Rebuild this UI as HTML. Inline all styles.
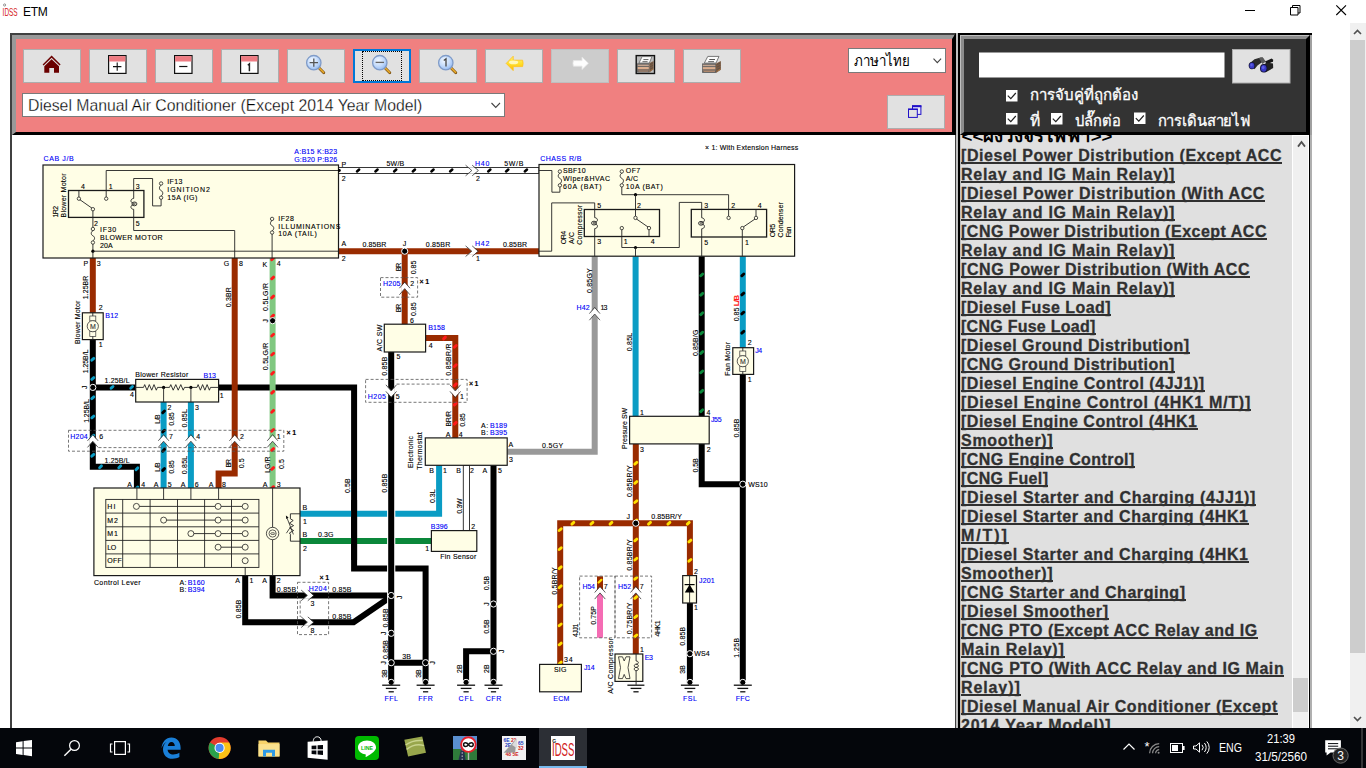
<!DOCTYPE html><html><head><meta charset="utf-8"><title>ETM</title><style>
*{box-sizing:border-box;margin:0;padding:0}
html,body{width:1366px;height:768px;overflow:hidden;background:#fff;font-family:"Liberation Sans",sans-serif;}
.abs{position:absolute}
#title{position:absolute;left:0;top:0;width:1366px;height:23px;background:#fff}
#title .t{position:absolute;left:23px;top:5px;font-size:12px;color:#000;letter-spacing:-0.3px}
#lp{position:absolute;left:14px;top:37px;width:939px;height:96px;background:#f08080}
.btn{position:absolute;top:49px;width:58px;height:34px;background:#e1e1e1;border:1px solid #adadad}
.btn svg{position:absolute;left:0;top:0}
#sel1{position:absolute;left:22px;top:93px;width:483px;height:24px;background:#fff;border:1px solid #7a7a7a;font-size:15.8px;line-height:24px;padding-left:5px;color:#000;-webkit-text-stroke:0.28px #fff;white-space:nowrap}
#sel2{position:absolute;left:848px;top:48px;width:98px;height:25px;background:#fff;border:1px solid #7a7a7a}
#rp{position:absolute;left:958px;top:33px;width:354px;height:102px;background:#333}
#list{position:absolute;left:961px;top:135px;width:331px;height:593px;background:#e0e0e0;overflow:hidden}
#list .l{position:absolute;left:0;font-size:16px;font-weight:bold;color:#303030;white-space:nowrap;line-height:19px;height:19px}
#list .l span{display:inline-block;border-bottom:2px solid #303030;height:18.5px;line-height:19px;-webkit-text-stroke:0.3px #303030}
#task{position:absolute;left:0;top:728px;width:1366px;height:40px;background:#04060b}
</style></head><body><div id="title"><svg class="abs" style="left:0;top:0" width="22" height="22"><circle cx="4.6" cy="5" r="1.1" fill="none" stroke="#555" stroke-width="0.6"/><text x="2.6" y="15.8" font-family="Liberation Sans,sans-serif" font-size="11.6" fill="#d42020" textLength="15" lengthAdjust="spacingAndGlyphs">IDSS</text></svg><div class="t">ETM</div><svg class="abs" style="left:1226px;top:0" width="140" height="23"><path d="M19 10.5 H29" stroke="#000" stroke-width="1"/><path d="M64.5 7.5 H72 V15 H64.5 Z M66.5 7.5 V5.5 H74 V13 H72" fill="none" stroke="#000" stroke-width="1"/><path d="M110.3 5.3 L120 15 M120 5.3 L110.3 15" stroke="#000" stroke-width="1.1"/></svg></div><div class="abs" style="left:1350px;top:23px;width:16px;height:705px;background:#f0f0f0"></div><div class="abs" style="left:1350px;top:40px;width:15px;height:613px;background:#cdcdcd"></div><svg class="abs" style="left:1350px;top:23px" width="16" height="17"><path d="M4 11 L7.5 7.5 L11 11" fill="none" stroke="#505050" stroke-width="1.6"/></svg><svg class="abs" style="left:1350px;top:711px" width="16" height="17"><path d="M4 6 L7.5 9.5 L11 6" fill="none" stroke="#505050" stroke-width="1.6"/></svg><svg class="abs" style="left:0;top:0" width="1366" height="140"><rect x="10" y="33" width="946" height="102" fill="#404040"/><rect x="12" y="35" width="942" height="100" fill="#999"/><polygon points="956,33 956,135 952,135 952,39" fill="#000"/><polygon points="12,135 16,132 956,132 956,135" fill="#000"/><rect x="16" y="39" width="936" height="93" fill="#f08080"/></svg><div class="btn" style="left:23px;"><svg style="position:absolute;left:-1px;top:-1px" width="58" height="34" viewBox="0 0 58 34"><path d="M28.6 6.6 L19.6 15.4 L20.6 16.4 L28.6 8.8 L36.6 16.4 L37.6 15.4 Z" fill="#6b0000"/><path d="M28.6 10.2 L21.3 17.2 V23.8 H26.3 V18.9 H31 V23.8 H36 V17.2 Z" fill="#6b0000"/></svg></div><div class="btn" style="left:89px;"><svg style="position:absolute;left:-1px;top:-1px" width="58" height="34" viewBox="0 0 58 34"><rect x="19.6" y="6.6" width="17.4" height="17.8" fill="#fff" stroke="#111" stroke-width="1.2"/><rect x="20.1" y="7.1" width="16.3" height="5.4" fill="#ee7b82"/><path d="M24 17.6 H32.4 M28.2 13.4 V21.8" stroke="#111" stroke-width="1.1"/></svg></div><div class="btn" style="left:155px;"><svg style="position:absolute;left:-1px;top:-1px" width="58" height="34" viewBox="0 0 58 34"><rect x="19.6" y="6.6" width="17.4" height="17.8" fill="#fff" stroke="#111" stroke-width="1.2"/><rect x="20.1" y="7.1" width="16.3" height="5.4" fill="#ee7b82"/><path d="M24.2 17.5 H32.4" stroke="#111" stroke-width="1.2"/></svg></div><div class="btn" style="left:221px;"><svg style="position:absolute;left:-1px;top:-1px" width="58" height="34" viewBox="0 0 58 34"><rect x="19.6" y="6.6" width="17.4" height="17.8" fill="#fff" stroke="#111" stroke-width="1.2"/><rect x="20.1" y="7.1" width="16.3" height="5.4" fill="#ee7b82"/><path d="M26.8 16.2 L28.4 14.8 V22.2" stroke="#222" stroke-width="1.5" fill="none"/></svg></div><div class="btn" style="left:287px;"><svg style="position:absolute;left:-1px;top:-1px" width="58" height="34" viewBox="0 0 58 34"><defs><radialGradient id="lg1" cx="0.4" cy="0.35" r="0.7"><stop offset="0" stop-color="#f2f8ff"/><stop offset="0.55" stop-color="#c4dbfb"/><stop offset="1" stop-color="#8fb6f0"/></radialGradient></defs><path d="M31.6 18.6 L36.8 23.8" stroke="#7a4e10" stroke-width="2.8" stroke-linecap="round"/><path d="M31.8 18.6 L36.6 23.4" stroke="#e8aa2a" stroke-width="1.5" stroke-linecap="round"/><circle cx="26.8" cy="13.7" r="7.2" fill="url(#lg1)" stroke="#7f9bc8" stroke-width="1.3"/><path d="M22.6 13.6 H31 M26.8 9.4 V17.8" stroke="#555" stroke-width="1.3"/></svg></div><div class="btn" style="left:353px;border:2px solid #0078d7;"><div style="position:absolute;left:7px;top:0px;width:40px;height:30px;border:1px dotted #000"></div><svg style="position:absolute;left:-2px;top:-2px" width="58" height="34" viewBox="0 0 58 34"><defs><radialGradient id="lg2" cx="0.4" cy="0.35" r="0.7"><stop offset="0" stop-color="#f2f8ff"/><stop offset="0.55" stop-color="#c4dbfb"/><stop offset="1" stop-color="#8fb6f0"/></radialGradient></defs><path d="M31.6 18.6 L36.8 23.8" stroke="#7a4e10" stroke-width="2.8" stroke-linecap="round"/><path d="M31.8 18.6 L36.6 23.4" stroke="#e8aa2a" stroke-width="1.5" stroke-linecap="round"/><circle cx="26.8" cy="13.7" r="7.2" fill="url(#lg2)" stroke="#7f9bc8" stroke-width="1.3"/><path d="M22.6 13.4 H31" stroke="#666" stroke-width="1.3"/></svg></div><div class="btn" style="left:419px;"><svg style="position:absolute;left:-1px;top:-1px" width="58" height="34" viewBox="0 0 58 34"><defs><radialGradient id="lg3" cx="0.4" cy="0.35" r="0.7"><stop offset="0" stop-color="#f2f8ff"/><stop offset="0.55" stop-color="#c4dbfb"/><stop offset="1" stop-color="#8fb6f0"/></radialGradient></defs><path d="M31.6 18.6 L36.8 23.8" stroke="#7a4e10" stroke-width="2.8" stroke-linecap="round"/><path d="M31.8 18.6 L36.6 23.4" stroke="#e8aa2a" stroke-width="1.5" stroke-linecap="round"/><circle cx="26.8" cy="13.7" r="7.2" fill="url(#lg3)" stroke="#7f9bc8" stroke-width="1.3"/><path d="M24.8 11.6 L27 9.8 V17.6" stroke="#444" stroke-width="1.3" fill="none"/></svg></div><div class="btn" style="left:485px;"><svg style="position:absolute;left:-1px;top:-1px" width="58" height="34" viewBox="0 0 58 34"><defs><linearGradient id="ya" x1="0" y1="0" x2="0" y2="1"><stop offset="0" stop-color="#fff27a"/><stop offset="0.5" stop-color="#ffe12e"/><stop offset="1" stop-color="#ffb400"/></linearGradient></defs><path d="M21.2 14.4 L28.2 7.2 V11.2 H37.6 Q38.6 14.4 37.6 17.6 H28.2 V21.6 Z" fill="url(#ya)" stroke="#ffc21a" stroke-width="0.8" stroke-linejoin="round"/><ellipse cx="28.6" cy="13.4" rx="4.6" ry="1.8" fill="#fffbd0" opacity="0.85"/></svg></div><div class="btn" style="left:551px;background:#cccccc;border-color:#bfbfbf;"><svg style="position:absolute;left:-1px;top:-1px" width="58" height="34" viewBox="0 0 58 34"><path d="M37.4 14.3 L31 8 V11.6 H22.4 Q21.4 14.3 22.4 17.2 H31 V20.6 Z" fill="#fdfdfd" stroke="#e4e4e4" stroke-width="0.8" stroke-linejoin="round"/></svg></div><div class="btn" style="left:617px;"><svg style="position:absolute;left:-1px;top:-1px" width="58" height="34" viewBox="0 0 58 34"><rect x="19.2" y="6.6" width="18.3" height="17.9" fill="#bdbdbd" stroke="#111" stroke-width="1.4"/><g transform="translate(20,7.4) scale(0.88,0.96)"><g transform="translate(0.0,0.0)"><polygon points="5.8,0.2 17,0.2 14,6.9 2.3,6.9" fill="#fbfbfb" stroke="#6a6a6a" stroke-width="0.9"/><path d="M7.3 3.3 H13 M6.2 5.5 H12" stroke="#555" stroke-width="1"/><rect x="0.1" y="7.2" width="13.9" height="9.5" fill="#5e5e5e"/><rect x="0.8" y="8.5" width="12.6" height="1.5" fill="#c4a692"/><rect x="0.8" y="10.9" width="12.6" height="2.3" fill="#dcae8e"/><rect x="0.8" y="13.2" width="12.6" height="1.6" fill="#8c7668"/><rect x="1.6" y="14.9" width="11.4" height="0.9" fill="#b98e70"/><polygon points="14,7.2 18.9,4.9 18.9,13.5 14,16.7" fill="#7d5c42"/><path d="M14.6 8.6 L18.4 6.8 M14.6 11 L18.4 9.2 M14.6 13.4 L18.4 11.6" stroke="#5a5048" stroke-width="0.9"/><path d="M15.4 15 L18.6 12.9" stroke="#b07840" stroke-width="0.8"/></g></g></svg></div><div class="btn" style="left:683px;"><svg style="position:absolute;left:-1px;top:-1px" width="58" height="34" viewBox="0 0 58 34"><g transform="translate(19.0,7.2)"><polygon points="5.8,0.2 17,0.2 14,6.9 2.3,6.9" fill="#fbfbfb" stroke="#6a6a6a" stroke-width="0.9"/><path d="M7.3 3.3 H13 M6.2 5.5 H12" stroke="#555" stroke-width="1"/><rect x="0.1" y="7.2" width="13.9" height="9.5" fill="#5e5e5e"/><rect x="0.8" y="8.5" width="12.6" height="1.5" fill="#c4a692"/><rect x="0.8" y="10.9" width="12.6" height="2.3" fill="#dcae8e"/><rect x="0.8" y="13.2" width="12.6" height="1.6" fill="#8c7668"/><rect x="1.6" y="14.9" width="11.4" height="0.9" fill="#b98e70"/><polygon points="14,7.2 18.9,4.9 18.9,13.5 14,16.7" fill="#7d5c42"/><path d="M14.6 8.6 L18.4 6.8 M14.6 11 L18.4 9.2 M14.6 13.4 L18.4 11.6" stroke="#5a5048" stroke-width="0.9"/><path d="M15.4 15 L18.6 12.9" stroke="#b07840" stroke-width="0.8"/></g></svg></div><div class="btn" style="left:887px;top:95px"><svg style="position:absolute;left:-1px;top:-1px" width="58" height="34" viewBox="0 0 58 34"><rect x="25.5" y="11" width="8.4" height="8.4" fill="#e8e8fa" stroke="#2010c8" stroke-width="1"/><rect x="25" y="10.2" width="9.4" height="2" fill="#2010c8"/><rect x="21.5" y="14.2" width="8.8" height="8.2" fill="#e1e1e1" stroke="#2010c8" stroke-width="1"/><rect x="21" y="13.6" width="9.8" height="1.4" fill="#2010c8"/></svg></div><div id="sel1"><span id="s1t">Diesel Manual Air Conditioner (Except 2014 Year Model)</span><svg class="abs" style="right:2px;top:6px" width="12" height="10"><path d="M1.5 3 L5.75 7.4 L10 3" fill="none" stroke="#444" stroke-width="1.1"/></svg></div><div id="sel2"><svg class="abs" style="left:0;top:0" width="96" height="23"><text x="5" y="17" font-family="Liberation Sans,sans-serif" font-size="15" fill="#000" textLength="56" lengthAdjust="spacingAndGlyphs">ภาษาไทย</text><path d="M84.5 9.6 L88.3 13.6 L92.1 9.6" fill="none" stroke="#444" stroke-width="1.1"/></svg></div><div class="abs" style="left:10px;top:135px;width:2px;height:593px;background:#404040"></div><div class="abs" style="left:955px;top:135px;width:1px;height:593px;background:#404040"></div><div class="abs" style="left:956px;top:33px;width:2px;height:695px;background:#c0c0c0"></div><svg class="abs" style="left:0;top:0" width="1366" height="728" viewBox="0 0 1366 728" font-family="Liberation Sans,sans-serif" stroke-width="0.12"><defs><clipPath id="dc"><rect x="12" y="135" width="943" height="593"/></clipPath></defs><g clip-path="url(#dc)"><rect x="338.5" y="167.5" width="200.5" height="6" fill="#fff" stroke="#222" stroke-width="0.9"/><path d="M357.0 171.5 L359.2 169.5" stroke="#000" stroke-width="2.5" stroke-linecap="round"/><path d="M375.4 171.5 L377.6 169.5" stroke="#000" stroke-width="2.5" stroke-linecap="round"/><path d="M394.1 171.5 L396.3 169.5" stroke="#000" stroke-width="2.5" stroke-linecap="round"/><path d="M412.8 171.5 L415.0 169.5" stroke="#000" stroke-width="2.5" stroke-linecap="round"/><path d="M431.4 171.5 L433.6 169.5" stroke="#000" stroke-width="2.5" stroke-linecap="round"/><path d="M450.1 171.5 L452.3 169.5" stroke="#000" stroke-width="2.5" stroke-linecap="round"/><path d="M488.2 171.5 L490.4 169.5" stroke="#000" stroke-width="2.5" stroke-linecap="round"/><path d="M506.1 171.5 L508.3 169.5" stroke="#000" stroke-width="2.5" stroke-linecap="round"/><path d="M524.8 171.5 L527.0 169.5" stroke="#000" stroke-width="2.5" stroke-linecap="round"/><polyline points="338.5,251.2 539.0,251.2" fill="none" stroke="#992b00" stroke-width="6.0" stroke-linejoin="miter" /><polyline points="404.7,251.2 404.7,324.5" fill="none" stroke="#992b00" stroke-width="6.0" stroke-linejoin="miter" /><polyline points="92.8,258.0 92.8,313.0" fill="none" stroke="#992b00" stroke-width="6.0" stroke-linejoin="miter" /><polyline points="92.8,339.6 92.8,466.8 136.9,466.8 136.9,488.0" fill="none" stroke="#000" stroke-width="6.0" stroke-linejoin="miter" /><path d="M91.8 360.2 L93.8 358.4" stroke="#0a9cc4" stroke-width="2.9" stroke-linecap="round"/><path d="M91.8 379.4 L93.8 377.6" stroke="#0a9cc4" stroke-width="2.9" stroke-linecap="round"/><path d="M91.8 398.6 L93.8 396.9" stroke="#0a9cc4" stroke-width="2.9" stroke-linecap="round"/><path d="M91.8 417.8 L93.8 416.1" stroke="#0a9cc4" stroke-width="2.9" stroke-linecap="round"/><path d="M91.8 437.0 L93.8 435.2" stroke="#0a9cc4" stroke-width="2.9" stroke-linecap="round"/><path d="M91.8 456.2 L93.8 454.4" stroke="#0a9cc4" stroke-width="2.9" stroke-linecap="round"/><path d="M99.6 467.7 L101.5 465.9" stroke="#0a9cc4" stroke-width="2.9" stroke-linecap="round"/><path d="M118.8 467.7 L120.7 465.9" stroke="#0a9cc4" stroke-width="2.9" stroke-linecap="round"/><path d="M136.0 469.7 L137.8 467.9" stroke="#0a9cc4" stroke-width="2.9" stroke-linecap="round"/><path d="M136.0 488.9 L137.8 487.1" stroke="#0a9cc4" stroke-width="2.9" stroke-linecap="round"/><polyline points="92.8,387.4 135.7,387.4" fill="none" stroke="#000" stroke-width="6.0" stroke-linejoin="miter" /><path d="M111.1 388.2 L113.0 386.5" stroke="#0a9cc4" stroke-width="2.9" stroke-linecap="round"/><path d="M130.7 388.2 L132.5 386.5" stroke="#0a9cc4" stroke-width="2.9" stroke-linecap="round"/><polyline points="218.6,387.5 354.1,387.5 354.1,568.5 425.6,568.5 425.6,682.0" fill="none" stroke="#000" stroke-width="6.0" stroke-linejoin="miter" /><polyline points="234.7,258.0 234.7,473.5 218.6,473.5 218.6,488.0" fill="none" stroke="#992b00" stroke-width="6.0" stroke-linejoin="miter" /><polyline points="272.6,258.0 272.6,488.0" fill="none" stroke="#80c880" stroke-width="6.0" stroke-linejoin="miter" /><path d="M271.7 259.8 L273.6 258.0" stroke="#ff1a1a" stroke-width="2.9" stroke-linecap="round"/><path d="M271.7 278.8 L273.6 277.1" stroke="#ff1a1a" stroke-width="2.9" stroke-linecap="round"/><path d="M271.7 297.9 L273.6 296.1" stroke="#ff1a1a" stroke-width="2.9" stroke-linecap="round"/><path d="M271.7 316.9 L273.6 315.2" stroke="#ff1a1a" stroke-width="2.9" stroke-linecap="round"/><path d="M271.7 336.0 L273.6 334.2" stroke="#ff1a1a" stroke-width="2.9" stroke-linecap="round"/><path d="M271.7 355.0 L273.6 353.3" stroke="#ff1a1a" stroke-width="2.9" stroke-linecap="round"/><path d="M271.7 374.1 L273.6 372.3" stroke="#ff1a1a" stroke-width="2.9" stroke-linecap="round"/><path d="M271.7 393.1 L273.6 391.4" stroke="#ff1a1a" stroke-width="2.9" stroke-linecap="round"/><path d="M271.7 412.2 L273.6 410.4" stroke="#ff1a1a" stroke-width="2.9" stroke-linecap="round"/><path d="M271.7 431.2 L273.6 429.5" stroke="#ff1a1a" stroke-width="2.9" stroke-linecap="round"/><path d="M271.7 450.3 L273.6 448.6" stroke="#ff1a1a" stroke-width="2.9" stroke-linecap="round"/><path d="M271.7 469.3 L273.6 467.6" stroke="#ff1a1a" stroke-width="2.9" stroke-linecap="round"/><path d="M271.7 488.4 L273.6 486.7" stroke="#ff1a1a" stroke-width="2.9" stroke-linecap="round"/><polyline points="163.6,402.0 163.6,488.0" fill="none" stroke="#0a9cc4" stroke-width="6.0" stroke-linejoin="miter" /><path d="M162.7 412.8 L164.5 411.0" stroke="#000" stroke-width="2.9" stroke-linecap="round"/><path d="M162.7 432.0 L164.5 430.2" stroke="#000" stroke-width="2.9" stroke-linecap="round"/><path d="M162.7 451.2 L164.5 449.4" stroke="#000" stroke-width="2.9" stroke-linecap="round"/><path d="M162.7 470.4 L164.5 468.6" stroke="#000" stroke-width="2.9" stroke-linecap="round"/><polyline points="190.9,402.0 190.9,488.0" fill="none" stroke="#0a9cc4" stroke-width="6.0" stroke-linejoin="miter" /><polyline points="300.0,513.8 439.1,513.8 439.1,465.3" fill="none" stroke="#0a9cc4" stroke-width="6.0" stroke-linejoin="miter" /><polyline points="300.0,541.0 431.5,541.0" fill="none" stroke="#0a873a" stroke-width="6.0" stroke-linejoin="miter" /><polyline points="354.1,500.0 354.1,560.0" fill="none" stroke="#000" stroke-width="6.0" stroke-linejoin="miter" /><polyline points="272.6,575.6 272.6,595.4 391.2,595.4" fill="none" stroke="#000" stroke-width="6.0" stroke-linejoin="miter" /><polyline points="245.2,575.6 245.2,622.2 353.6,622.2 391.2,596.5" fill="none" stroke="#000" stroke-width="6.0" stroke-linejoin="miter" /><polyline points="391.2,352.0 391.2,682.0" fill="none" stroke="#fff" stroke-width="8.2" stroke-linejoin="miter" /><polyline points="391.2,352.0 391.2,682.0" fill="none" stroke="#000" stroke-width="6.0" stroke-linejoin="miter" /><polyline points="388.0,595.4 391.2,595.4" fill="none" stroke="#000" stroke-width="6.0" stroke-linejoin="miter" /><polyline points="391.2,662.7 425.6,662.7" fill="none" stroke="#000" stroke-width="6.0" stroke-linejoin="miter" /><polyline points="425.6,338.0 455.3,338.0 455.3,438.0" fill="none" stroke="#992b00" stroke-width="6.0" stroke-linejoin="miter" /><path d="M443.6 338.9 L445.4 337.1" stroke="#ff1a1a" stroke-width="2.9" stroke-linecap="round"/><path d="M454.4 347.2 L456.2 345.5" stroke="#ff1a1a" stroke-width="2.9" stroke-linecap="round"/><path d="M454.4 366.5 L456.2 364.8" stroke="#ff1a1a" stroke-width="2.9" stroke-linecap="round"/><path d="M454.4 385.7 L456.2 383.9" stroke="#ff1a1a" stroke-width="2.9" stroke-linecap="round"/><path d="M454.4 404.9 L456.2 403.1" stroke="#ff1a1a" stroke-width="2.9" stroke-linecap="round"/><path d="M454.4 424.1 L456.2 422.4" stroke="#ff1a1a" stroke-width="2.9" stroke-linecap="round"/><rect x="463.3" y="465.3" width="6.2" height="65.5" fill="#fff" stroke="#222" stroke-width="0.9"/><polyline points="493.5,465.3 493.5,682.0" fill="none" stroke="#000" stroke-width="6.0" stroke-linejoin="miter" /><polyline points="466.1,682.0 466.1,651.3 493.5,651.3" fill="none" stroke="#000" stroke-width="6.0" stroke-linejoin="miter" /><polyline points="594.7,256.2 594.7,451.7 507.2,451.7" fill="none" stroke="#999999" stroke-width="6.0" stroke-linejoin="miter" /><polyline points="635.6,256.2 635.6,416.5" fill="none" stroke="#0a9cc4" stroke-width="6.0" stroke-linejoin="miter" /><polyline points="701.7,256.2 701.7,416.5" fill="none" stroke="#000" stroke-width="6.0" stroke-linejoin="miter" /><path d="M700.8 275.8 L702.7 274.0" stroke="#0a873a" stroke-width="2.9" stroke-linecap="round"/><path d="M700.8 295.1 L702.7 293.4" stroke="#0a873a" stroke-width="2.9" stroke-linecap="round"/><path d="M700.8 314.6 L702.7 312.8" stroke="#0a873a" stroke-width="2.9" stroke-linecap="round"/><path d="M700.8 333.9 L702.7 332.2" stroke="#0a873a" stroke-width="2.9" stroke-linecap="round"/><path d="M700.8 353.4 L702.7 351.6" stroke="#0a873a" stroke-width="2.9" stroke-linecap="round"/><path d="M700.8 372.8 L702.7 371.0" stroke="#0a873a" stroke-width="2.9" stroke-linecap="round"/><path d="M700.8 392.1 L702.7 390.4" stroke="#0a873a" stroke-width="2.9" stroke-linecap="round"/><path d="M700.8 411.6 L702.7 409.8" stroke="#0a873a" stroke-width="2.9" stroke-linecap="round"/><polyline points="742.8,256.2 742.8,348.0" fill="none" stroke="#0a9cc4" stroke-width="6.0" stroke-linejoin="miter" /><path d="M741.8 275.8 L743.8 274.0" stroke="#000" stroke-width="2.9" stroke-linecap="round"/><path d="M741.8 294.9 L743.8 293.1" stroke="#000" stroke-width="2.9" stroke-linecap="round"/><path d="M741.8 313.9 L743.8 312.2" stroke="#000" stroke-width="2.9" stroke-linecap="round"/><path d="M741.8 333.1 L743.8 331.3" stroke="#000" stroke-width="2.9" stroke-linecap="round"/><polyline points="742.8,374.4 742.8,682.0" fill="none" stroke="#000" stroke-width="6.0" stroke-linejoin="miter" /><polyline points="701.7,443.9 701.7,484.2 742.8,484.2" fill="none" stroke="#000" stroke-width="6.0" stroke-linejoin="miter" /><polyline points="635.8,443.9 635.8,654.0" fill="none" stroke="#992b00" stroke-width="6.0" stroke-linejoin="miter" /><path d="M634.8 464.1 L636.8 462.4" stroke="#ffe000" stroke-width="2.9" stroke-linecap="round"/><path d="M634.8 483.3 L636.8 481.6" stroke="#ffe000" stroke-width="2.9" stroke-linecap="round"/><path d="M634.8 502.5 L636.8 500.8" stroke="#ffe000" stroke-width="2.9" stroke-linecap="round"/><path d="M634.8 521.7 L636.8 520.0" stroke="#ffe000" stroke-width="2.9" stroke-linecap="round"/><path d="M634.8 540.8 L636.8 539.1" stroke="#ffe000" stroke-width="2.9" stroke-linecap="round"/><path d="M634.8 560.0 L636.8 558.3" stroke="#ffe000" stroke-width="2.9" stroke-linecap="round"/><path d="M634.8 579.2 L636.8 577.5" stroke="#ffe000" stroke-width="2.9" stroke-linecap="round"/><path d="M634.8 598.3 L636.8 596.6" stroke="#ffe000" stroke-width="2.9" stroke-linecap="round"/><path d="M634.8 617.5 L636.8 615.8" stroke="#ffe000" stroke-width="2.9" stroke-linecap="round"/><path d="M634.8 636.7 L636.8 635.0" stroke="#ffe000" stroke-width="2.9" stroke-linecap="round"/><polyline points="560.2,664.5 560.2,523.2 689.9,523.2 689.9,575.6" fill="none" stroke="#992b00" stroke-width="6.0" stroke-linejoin="miter" /><path d="M610.0 524.1 L611.9 522.4" stroke="#ffe000" stroke-width="2.9" stroke-linecap="round"/><path d="M590.9 524.1 L592.9 522.4" stroke="#ffe000" stroke-width="2.9" stroke-linecap="round"/><path d="M571.9 524.1 L573.8 522.4" stroke="#ffe000" stroke-width="2.9" stroke-linecap="round"/><path d="M559.2 530.5 L561.2 528.8" stroke="#ffe000" stroke-width="2.9" stroke-linecap="round"/><path d="M559.2 549.5 L561.2 547.8" stroke="#ffe000" stroke-width="2.9" stroke-linecap="round"/><path d="M559.2 568.6 L561.2 566.9" stroke="#ffe000" stroke-width="2.9" stroke-linecap="round"/><path d="M559.2 587.6 L561.2 585.9" stroke="#ffe000" stroke-width="2.9" stroke-linecap="round"/><path d="M559.2 606.7 L561.2 605.0" stroke="#ffe000" stroke-width="2.9" stroke-linecap="round"/><path d="M559.2 625.7 L561.2 624.0" stroke="#ffe000" stroke-width="2.9" stroke-linecap="round"/><path d="M559.2 644.8 L561.2 643.1" stroke="#ffe000" stroke-width="2.9" stroke-linecap="round"/><path d="M559.2 663.8 L561.2 662.1" stroke="#ffe000" stroke-width="2.9" stroke-linecap="round"/><path d="M648.5 524.1 L650.5 522.4" stroke="#ffe000" stroke-width="2.9" stroke-linecap="round"/><path d="M667.9 524.1 L669.9 522.4" stroke="#ffe000" stroke-width="2.9" stroke-linecap="round"/><path d="M687.3 524.1 L689.2 522.4" stroke="#ffe000" stroke-width="2.9" stroke-linecap="round"/><path d="M688.9 541.9 L690.9 540.1" stroke="#ffe000" stroke-width="2.9" stroke-linecap="round"/><path d="M688.9 561.2 L690.9 559.5" stroke="#ffe000" stroke-width="2.9" stroke-linecap="round"/><polyline points="600.0,576.3 600.0,590.0" fill="none" stroke="#992b00" stroke-width="6.0" stroke-linejoin="miter" /><path d="M598.6 582.5 L601.4 579.9" stroke="#ffe000" stroke-width="2.3" stroke-linecap="round"/><polyline points="600.0,592.0 600.0,637.8" fill="none" stroke="#f56cb4" stroke-width="6.0" stroke-linejoin="miter" /><polyline points="689.9,603.0 689.9,682.0" fill="none" stroke="#000" stroke-width="6.0" stroke-linejoin="miter" /><circle cx="404.7" cy="251.2" r="3.1" fill="#000" stroke="#fff" stroke-width="1"/><circle cx="92.8" cy="387.4" r="3.1" fill="#000" stroke="#fff" stroke-width="1"/><circle cx="272.6" cy="320.7" r="3.1" fill="#000" stroke="#fff" stroke-width="1"/><circle cx="635.8" cy="523.2" r="3.1" fill="#000" stroke="#fff" stroke-width="1"/><circle cx="391.2" cy="595.5" r="3.1" fill="#000" stroke="#fff" stroke-width="1"/><circle cx="391.2" cy="633.3" r="3.1" fill="#000" stroke="#fff" stroke-width="1"/><circle cx="391.2" cy="662.7" r="3.1" fill="#000" stroke="#fff" stroke-width="1"/><circle cx="425.6" cy="662.7" r="3.1" fill="#000" stroke="#fff" stroke-width="1"/><circle cx="493.5" cy="604.0" r="3.1" fill="#000" stroke="#fff" stroke-width="1"/><circle cx="493.5" cy="651.3" r="3.1" fill="#000" stroke="#fff" stroke-width="1"/><circle cx="742.8" cy="484.2" r="3.1" fill="#000" stroke="#fff" stroke-width="1"/><circle cx="689.9" cy="653.7" r="3.1" fill="#000" stroke="#fff" stroke-width="1"/><polygon points="89.5,438.9 92.8,435.2 96.1,438.9 96.1,445.1 92.8,441.4 89.5,445.1" fill="#fff"/><polyline points="87.5,440.8 92.8,434.6 98.1,440.8" fill="none" stroke="#333" stroke-width="0.8"/><polyline points="87.5,447.4 92.8,441.2 98.1,447.4" fill="none" stroke="#333" stroke-width="0.8"/><polygon points="160.3,438.9 163.6,435.2 166.9,438.9 166.9,445.1 163.6,441.4 160.3,445.1" fill="#fff"/><polyline points="158.3,440.8 163.6,434.6 168.9,440.8" fill="none" stroke="#333" stroke-width="0.8"/><polyline points="158.3,447.4 163.6,441.2 168.9,447.4" fill="none" stroke="#333" stroke-width="0.8"/><polygon points="187.6,438.9 190.9,435.2 194.2,438.9 194.2,445.1 190.9,441.4 187.6,445.1" fill="#fff"/><polyline points="185.6,440.8 190.9,434.6 196.2,440.8" fill="none" stroke="#333" stroke-width="0.8"/><polyline points="185.6,447.4 190.9,441.2 196.2,447.4" fill="none" stroke="#333" stroke-width="0.8"/><polygon points="231.4,438.9 234.7,435.2 238.0,438.9 238.0,445.1 234.7,441.4 231.4,445.1" fill="#fff"/><polyline points="229.4,440.8 234.7,434.6 240.0,440.8" fill="none" stroke="#333" stroke-width="0.8"/><polyline points="229.4,447.4 234.7,441.2 240.0,447.4" fill="none" stroke="#333" stroke-width="0.8"/><polygon points="269.3,438.9 272.6,435.2 275.9,438.9 275.9,445.1 272.6,441.4 269.3,445.1" fill="#fff"/><polyline points="267.3,440.8 272.6,434.6 277.9,440.8" fill="none" stroke="#333" stroke-width="0.8"/><polyline points="267.3,447.4 272.6,441.2 277.9,447.4" fill="none" stroke="#333" stroke-width="0.8"/><polygon points="401.4,286.3 404.7,282.6 408.0,286.3 408.0,292.5 404.7,288.8 401.4,292.5" fill="#fff"/><polyline points="399.4,288.2 404.7,282.0 410.0,288.2" fill="none" stroke="#333" stroke-width="0.8"/><polyline points="399.4,294.8 404.7,288.6 410.0,294.8" fill="none" stroke="#333" stroke-width="0.8"/><polygon points="591.4,311.7 594.7,308.0 598.0,311.7 598.0,317.9 594.7,314.2 591.4,317.9" fill="#fff"/><polyline points="589.4,313.6 594.7,307.4 600.0,313.6" fill="none" stroke="#333" stroke-width="0.8"/><polyline points="589.4,320.2 594.7,314.0 600.0,320.2" fill="none" stroke="#333" stroke-width="0.8"/><polygon points="387.9,393.3 391.2,397.0 394.5,393.3 394.5,387.1 391.2,390.8 387.9,387.1" fill="#fff"/><polyline points="385.9,391.4 391.2,397.6 396.5,391.4" fill="none" stroke="#333" stroke-width="0.8"/><polyline points="385.9,384.8 391.2,391.0 396.5,384.8" fill="none" stroke="#333" stroke-width="0.8"/><polygon points="452.0,393.3 455.3,397.0 458.6,393.3 458.6,387.1 455.3,390.8 452.0,387.1" fill="#fff"/><polyline points="450.0,391.4 455.3,397.6 460.6,391.4" fill="none" stroke="#333" stroke-width="0.8"/><polyline points="450.0,384.8 455.3,391.0 460.6,384.8" fill="none" stroke="#333" stroke-width="0.8"/><polygon points="474.1,167.2 477.8,170.5 474.1,173.8 467.9,173.8 471.6,170.5 467.9,167.2" fill="#fff"/><polyline points="472.2,165.2 478.4,170.5 472.2,175.8" fill="none" stroke="#333" stroke-width="0.8"/><polyline points="465.6,165.2 471.8,170.5 465.6,175.8" fill="none" stroke="#333" stroke-width="0.8"/><polygon points="474.1,247.9 477.8,251.2 474.1,254.5 467.9,254.5 471.6,251.2 467.9,247.9" fill="#fff"/><polyline points="472.2,245.9 478.4,251.2 472.2,256.5" fill="none" stroke="#333" stroke-width="0.8"/><polyline points="465.6,245.9 471.8,251.2 465.6,256.5" fill="none" stroke="#333" stroke-width="0.8"/><polygon points="309.7,592.1 313.4,595.4 309.7,598.7 303.5,598.7 307.2,595.4 303.5,592.1" fill="#fff"/><polyline points="307.8,590.1 314.0,595.4 307.8,600.7" fill="none" stroke="#333" stroke-width="0.8"/><polyline points="301.2,590.1 307.4,595.4 301.2,600.7" fill="none" stroke="#333" stroke-width="0.8"/><polygon points="309.7,618.9 313.4,622.2 309.7,625.5 303.5,625.5 307.2,622.2 303.5,618.9" fill="#fff"/><polyline points="307.8,616.9 314.0,622.2 307.8,627.5" fill="none" stroke="#333" stroke-width="0.8"/><polyline points="301.2,616.9 307.4,622.2 301.2,627.5" fill="none" stroke="#333" stroke-width="0.8"/><path d="M300.2 600.5 V617" stroke="#555" stroke-width="0.8" stroke-dasharray="3 2"/><polygon points="596.7,590.6 600.0,586.9 603.3,590.6 603.3,596.8 600.0,593.1 596.7,596.8" fill="#fff"/><polyline points="594.7,592.5 600.0,586.3 605.3,592.5" fill="none" stroke="#333" stroke-width="0.8"/><polyline points="594.7,599.1 600.0,592.9 605.3,599.1" fill="none" stroke="#333" stroke-width="0.8"/><polygon points="632.5,590.6 635.8,586.9 639.1,590.6 639.1,596.8 635.8,593.1 632.5,596.8" fill="#fff"/><polyline points="630.5,592.5 635.8,586.3 641.1,592.5" fill="none" stroke="#333" stroke-width="0.8"/><polyline points="630.5,599.1 635.8,592.9 641.1,599.1" fill="none" stroke="#333" stroke-width="0.8"/><path d="M98.5 447.6 H267 M396.6 384.1 H450" stroke="#555" stroke-width="0.8" stroke-dasharray="3 2"/><rect x="68.5" y="430.3" width="215.3" height="20.9" fill="none" stroke="#555" stroke-width="0.8" stroke-dasharray="3 2"/><rect x="380.5" y="277.6" width="37.1" height="19.6" fill="none" stroke="#555" stroke-width="0.8" stroke-dasharray="3 2"/><rect x="365.6" y="379.4" width="101.5" height="22.9" fill="none" stroke="#555" stroke-width="0.8" stroke-dasharray="3 2"/><rect x="297.5" y="582.3" width="31.1" height="52.3" fill="none" stroke="#555" stroke-width="0.8" stroke-dasharray="3 2"/><rect x="579.6" y="576.1" width="35.4" height="61.7" fill="none" stroke="#555" stroke-width="0.8" stroke-dasharray="3 2"/><rect x="615.0" y="576.1" width="36.6" height="61.7" fill="none" stroke="#555" stroke-width="0.8" stroke-dasharray="3 2"/><rect x="43.0" y="165.0" width="295.5" height="93.0" fill="#fffee6" stroke="#1a1a1a" stroke-width="1.2"/><rect x="539.0" y="164.5" width="255.6" height="91.7" fill="#fffee6" stroke="#1a1a1a" stroke-width="1.2"/><rect x="82.4" y="312.8" width="20.8" height="26.8" fill="#fffee6" stroke="#1a1a1a" stroke-width="1.2"/><rect x="135.7" y="379.4" width="82.9" height="22.6" fill="#fffee6" stroke="#1a1a1a" stroke-width="1.2"/><rect x="93.9" y="488.0" width="206.1" height="87.6" fill="#fffee6" stroke="#1a1a1a" stroke-width="1.2"/><rect x="384.3" y="324.2" width="41.3" height="27.8" fill="#fffee6" stroke="#1a1a1a" stroke-width="1.2"/><rect x="425.3" y="437.9" width="81.9" height="27.4" fill="#fffee6" stroke="#1a1a1a" stroke-width="1.2"/><rect x="431.4" y="530.6" width="45.4" height="20.8" fill="#fffee6" stroke="#1a1a1a" stroke-width="1.2"/><rect x="629.6" y="416.3" width="79.6" height="27.6" fill="#fffee6" stroke="#1a1a1a" stroke-width="1.2"/><rect x="732.8" y="347.7" width="20.8" height="26.7" fill="#fffee6" stroke="#1a1a1a" stroke-width="1.2"/><rect x="539.6" y="664.4" width="41.8" height="27.4" fill="#fffee6" stroke="#1a1a1a" stroke-width="1.2"/><rect x="615.0" y="654.0" width="27.8" height="27.4" fill="#fffee6" stroke="#1a1a1a" stroke-width="1.2"/><rect x="682.7" y="575.6" width="13.8" height="27.4" fill="#fffee6" stroke="#1a1a1a" stroke-width="1.2"/><rect x="68.5" y="190.5" width="75.4" height="26.9" fill="#fffee6" stroke="#1a1a1a" stroke-width="1.3"/><polyline points="106.2,197.0 106.2,170.5 338.5,170.5" fill="none" stroke="#222" stroke-width="0.9"/><circle cx="339.4" cy="170.5" r="1.4" fill="#000"/><polyline points="78.9,190.5 78.9,197.0" fill="none" stroke="#222" stroke-width="0.9"/><circle cx="78.9" cy="198.7" r="1.7" fill="#fffee6" stroke="#222" stroke-width="0.8"/><circle cx="106.2" cy="198.7" r="1.7" fill="#fffee6" stroke="#222" stroke-width="0.8"/><polyline points="79.9,199.7 92.0,208.2" fill="none" stroke="#222" stroke-width="0.9"/><circle cx="92.9" cy="209.2" r="1.7" fill="#fffee6" stroke="#222" stroke-width="0.8"/><polyline points="92.9,210.7 92.9,227.5" fill="none" stroke="#222" stroke-width="0.9"/><circle cx="92.9" cy="229.0" r="1.7" fill="#fffee6" stroke="#222" stroke-width="0.8"/><circle cx="92.9" cy="242.5" r="1.7" fill="#fffee6" stroke="#222" stroke-width="0.8"/><path d="M92.9 230.7 C90.7 232.0 90.7 234.8 92.9 235.8 S95.1 239.5 92.9 240.8" fill="none" stroke="#222" stroke-width="0.9"/><polyline points="92.9,244.0 92.9,258.0" fill="none" stroke="#222" stroke-width="0.9"/><circle cx="92.9" cy="251.2" r="1.6" fill="#000"/><polyline points="92.9,251.2 338.5,251.2" fill="none" stroke="#222" stroke-width="0.9"/><polyline points="133.7,190.5 133.7,198.4" fill="none" stroke="#222" stroke-width="0.9"/><polyline points="133.7,209.4 133.7,217.4" fill="none" stroke="#222" stroke-width="0.9"/><path d="M133.7 198.4 C130.1 198.8 130.1 202.8 133.3 203.1 M133.3 204.8 C130.1 205.1 130.1 209.1 133.7 209.4" fill="none" stroke="#222" stroke-width="0.9"/><ellipse cx="134.4" cy="203.9" rx="2.5" ry="1.9" fill="none" stroke="#222" stroke-width="0.9"/><ellipse cx="134.3" cy="203.9" rx="1" ry="0.8" fill="none" stroke="#222" stroke-width="0.7"/><polyline points="133.7,190.5 133.7,178.5 152.6,178.5 152.6,205.9 161.1,205.9 161.1,199.2" fill="none" stroke="#222" stroke-width="0.9"/><circle cx="161.1" cy="183.5" r="1.7" fill="#fffee6" stroke="#222" stroke-width="0.8"/><circle cx="161.1" cy="197.7" r="1.7" fill="#fffee6" stroke="#222" stroke-width="0.8"/><path d="M161.1 185.2 C158.9 186.5 158.9 189.6 161.1 190.6 S163.3 194.7 161.1 196.0" fill="none" stroke="#222" stroke-width="0.9"/><polyline points="133.7,217.4 133.7,230.5 234.7,230.5 234.7,258.0" fill="none" stroke="#222" stroke-width="0.9"/><circle cx="272.1" cy="218.9" r="1.7" fill="#fffee6" stroke="#222" stroke-width="0.8"/><circle cx="272.1" cy="232.5" r="1.7" fill="#fffee6" stroke="#222" stroke-width="0.8"/><path d="M272.1 220.6 C269.9 221.9 269.9 224.7 272.1 225.7 S274.3 229.5 272.1 230.8" fill="none" stroke="#222" stroke-width="0.9"/><polyline points="272.1,234.0 272.1,258.0" fill="none" stroke="#222" stroke-width="0.9"/><text x="43.6" y="161.1" fill="#0000f8" stroke="#0000f8" text-anchor="start" font-size="7" textLength="30.0" lengthAdjust="spacing">CAB J/B</text><text x="294.2" y="154.2" fill="#0000f8" stroke="#0000f8" text-anchor="start" font-size="7" textLength="43.0" lengthAdjust="spacing">A:B15 K:B23</text><text x="294.2" y="161.9" fill="#0000f8" stroke="#0000f8" text-anchor="start" font-size="7" textLength="43.0" lengthAdjust="spacing">G:B20 P:B26</text><text x="82.9" y="189.0" fill="#000" stroke="#000" text-anchor="middle" font-size="7">4</text><text x="110.8" y="189.0" fill="#000" stroke="#000" text-anchor="middle" font-size="7">1</text><text x="137.7" y="189.0" fill="#000" stroke="#000" text-anchor="middle" font-size="7">3</text><text x="95.9" y="226.3" fill="#000" stroke="#000" text-anchor="middle" font-size="7">2</text><text x="137.7" y="226.3" fill="#000" stroke="#000" text-anchor="middle" font-size="7">5</text><text x="167.3" y="184.0" fill="#000" stroke="#000" text-anchor="start" font-size="7" textLength="15.0" lengthAdjust="spacing">IF13</text><text x="167.3" y="192.2" fill="#000" stroke="#000" text-anchor="start" font-size="7" textLength="42.5" lengthAdjust="spacing">IGNITION2</text><text x="167.3" y="200.2" fill="#000" stroke="#000" text-anchor="start" font-size="7" textLength="30.0" lengthAdjust="spacing">15A (IG)</text><text x="100.1" y="231.8" fill="#000" stroke="#000" text-anchor="start" font-size="7" textLength="16.0" lengthAdjust="spacing">IF30</text><text x="100.1" y="240.0" fill="#000" stroke="#000" text-anchor="start" font-size="7" textLength="62.5" lengthAdjust="spacing">BLOWER MOTOR</text><text x="100.1" y="248.0" fill="#000" stroke="#000" text-anchor="start" font-size="7" textLength="12.5" lengthAdjust="spacing">20A</text><text x="278.3" y="220.9" fill="#000" stroke="#000" text-anchor="start" font-size="7" textLength="15.5" lengthAdjust="spacing">IF28</text><text x="278.3" y="228.8" fill="#000" stroke="#000" text-anchor="start" font-size="7" textLength="62.0" lengthAdjust="spacing">ILLUMINATIONS</text><text x="278.3" y="236.3" fill="#000" stroke="#000" text-anchor="start" font-size="7" textLength="38.5" lengthAdjust="spacing">10A (TAIL)</text><text transform="translate(58.0,211.7) rotate(-90)" fill="#000" stroke="#000" text-anchor="middle" font-size="7" textLength="11.7" lengthAdjust="spacing">1R2</text><text transform="translate(66.0,195.5) rotate(-90)" fill="#000" stroke="#000" text-anchor="middle" font-size="7" textLength="44.0" lengthAdjust="spacing">Blower Motor</text><text x="343.8" y="166.7" fill="#000" stroke="#000" text-anchor="middle" font-size="7">P</text><text x="343.8" y="181.0" fill="#000" stroke="#000" text-anchor="middle" font-size="7">2</text><text x="343.8" y="246.1" fill="#000" stroke="#000" text-anchor="middle" font-size="7">A</text><text x="343.8" y="261.2" fill="#000" stroke="#000" text-anchor="middle" font-size="7">2</text><text x="85.9" y="266.1" fill="#000" stroke="#000" text-anchor="middle" font-size="7">P</text><text x="98.8" y="266.1" fill="#000" stroke="#000" text-anchor="middle" font-size="7">3</text><text x="226.5" y="266.1" fill="#000" stroke="#000" text-anchor="middle" font-size="7">G</text><text x="241.0" y="266.1" fill="#000" stroke="#000" text-anchor="middle" font-size="7">8</text><text x="264.9" y="266.7" fill="#000" stroke="#000" text-anchor="middle" font-size="7">K</text><text x="278.8" y="266.1" fill="#000" stroke="#000" text-anchor="middle" font-size="7">4</text><text transform="translate(88.4,287.4) rotate(-90)" fill="#000" stroke="#000" text-anchor="middle" font-size="7" textLength="23.6" lengthAdjust="spacing">1.25BR</text><text transform="translate(231.0,297.2) rotate(-90)" fill="#000" stroke="#000" text-anchor="middle" font-size="7" textLength="20.0" lengthAdjust="spacing">0.3BR</text><text transform="translate(268.1,297.0) rotate(-90)" fill="#000" stroke="#000" text-anchor="middle" font-size="7" textLength="28.2" lengthAdjust="spacing">0.5LG/R</text><text x="386.5" y="165.6" fill="#000" stroke="#000" text-anchor="start" font-size="7" textLength="17.7" lengthAdjust="spacing">5W/B</text><text x="504.2" y="165.6" fill="#000" stroke="#000" text-anchor="start" font-size="7" textLength="19.2" lengthAdjust="spacing">5W/B</text><text x="475.1" y="165.6" fill="#0000f8" stroke="#0000f8" text-anchor="start" font-size="7" textLength="14.2" lengthAdjust="spacing">H40</text><text x="478.0" y="181.0" fill="#000" stroke="#000" text-anchor="middle" font-size="7">2</text><text x="362.4" y="247.0" fill="#000" stroke="#000" text-anchor="start" font-size="7" textLength="24.0" lengthAdjust="spacing">0.85BR</text><text x="425.8" y="247.0" fill="#000" stroke="#000" text-anchor="start" font-size="7" textLength="24.4" lengthAdjust="spacing">0.85BR</text><text x="503.0" y="247.0" fill="#000" stroke="#000" text-anchor="start" font-size="7" textLength="24.0" lengthAdjust="spacing">0.85BR</text><text x="404.4" y="246.3" fill="#000" stroke="#000" text-anchor="middle" font-size="7">J</text><text x="475.1" y="245.7" fill="#0000f8" stroke="#0000f8" text-anchor="start" font-size="7" textLength="14.2" lengthAdjust="spacing">H42</text><text x="478.0" y="261.2" fill="#000" stroke="#000" text-anchor="middle" font-size="7">1</text><text transform="translate(400.9,266.9) rotate(-90)" fill="#000" stroke="#000" text-anchor="middle" font-size="7" textLength="8.5" lengthAdjust="spacing">BR</text><text transform="translate(415.9,267.4) rotate(-90)" fill="#000" stroke="#000" text-anchor="middle" font-size="7" textLength="13.5" lengthAdjust="spacing">0.85</text><text transform="translate(400.9,308.0) rotate(-90)" fill="#000" stroke="#000" text-anchor="middle" font-size="7" textLength="8.5" lengthAdjust="spacing">BR</text><text transform="translate(415.9,309.2) rotate(-90)" fill="#000" stroke="#000" text-anchor="middle" font-size="7" textLength="13.5" lengthAdjust="spacing">0.85</text><text x="383.0" y="286.1" fill="#0000f8" stroke="#0000f8" text-anchor="start" font-size="7" textLength="17.4" lengthAdjust="spacing">H205</text><text x="412.1" y="286.1" fill="#000" stroke="#000" text-anchor="middle" font-size="7">2</text><text x="419.6" y="283.6" fill="#000" stroke="#000" text-anchor="start" font-size="7" textLength="9.5" lengthAdjust="spacing" font-weight="bold">× 1</text><polyline points="92.8,312.8 92.8,316.0" fill="none" stroke="#222" stroke-width="0.9"/><polyline points="92.8,336.4 92.8,339.6" fill="none" stroke="#222" stroke-width="0.9"/><rect x="89.8" y="316" width="6" height="5" fill="none" stroke="#333" stroke-width="0.7"/><rect x="89.8" y="331.4" width="6" height="5" fill="none" stroke="#333" stroke-width="0.7"/><circle cx="92.8" cy="326.2" r="5.6" fill="#fffee6" stroke="#333" stroke-width="0.8"/><text x="92.8" y="328.9" fill="#333" stroke="#333" text-anchor="middle" font-size="7">M</text><text x="100.8" y="310.2" fill="#000" stroke="#000" text-anchor="middle" font-size="7">2</text><text x="105.3" y="318.0" fill="#0000f8" stroke="#0000f8" text-anchor="start" font-size="7" textLength="12.8" lengthAdjust="spacing">B12</text><text x="100.8" y="347.1" fill="#000" stroke="#000" text-anchor="middle" font-size="7">1</text><text transform="translate(80.2,322.3) rotate(-90)" fill="#000" stroke="#000" text-anchor="middle" font-size="7" textLength="43.5" lengthAdjust="spacing">Blower Motor</text><text transform="translate(88.4,361.4) rotate(-90)" fill="#000" stroke="#000" text-anchor="middle" font-size="7" textLength="23.6" lengthAdjust="spacing">1.25B/L</text><text transform="translate(88.8,411.0) rotate(-90)" fill="#000" stroke="#000" text-anchor="middle" font-size="7" textLength="23.6" lengthAdjust="spacing">1.25B/L</text><text transform="translate(87.2,387.2) rotate(-90)" fill="#000" stroke="#000" text-anchor="middle" font-size="7">J</text><text x="104.6" y="382.7" fill="#000" stroke="#000" text-anchor="start" font-size="7" textLength="25.0" lengthAdjust="spacing">1.25B/L</text><text x="104.6" y="462.8" fill="#000" stroke="#000" text-anchor="start" font-size="7" textLength="25.0" lengthAdjust="spacing">1.25B/L</text><text x="135.2" y="376.5" fill="#000" stroke="#000" text-anchor="start" font-size="7" textLength="53.2" lengthAdjust="spacing">Blower Resistor</text><text x="203.4" y="377.7" fill="#0000f8" stroke="#0000f8" text-anchor="start" font-size="7" textLength="12.6" lengthAdjust="spacing">B13</text><text x="132.0" y="396.9" fill="#000" stroke="#000" text-anchor="middle" font-size="7">4</text><text x="221.8" y="397.6" fill="#000" stroke="#000" text-anchor="middle" font-size="7">1</text><polyline points="135.7,387.4 143.5,387.4 144.7,384.6 147.0,390.2 149.3,384.6 151.7,390.2 154.0,384.6 156.3,390.2 157.5,387.4 163.6,387.4 169.5,387.4 170.8,384.6 173.2,390.2 175.8,384.6 178.2,390.2 180.8,384.6 183.2,390.2 184.5,387.4 190.9,387.4 197.0,387.4 198.1,384.6 200.4,390.2 202.6,384.6 204.9,390.2 207.1,384.6 209.4,390.2 210.5,387.4 218.6,387.4" fill="none" stroke="#222" stroke-width="0.9"/><circle cx="163.6" cy="387.4" r="1.6" fill="#000"/><circle cx="190.9" cy="387.4" r="1.6" fill="#000"/><polyline points="163.6,387.4 163.6,402.0" fill="none" stroke="#222" stroke-width="0.9"/><polyline points="190.9,387.4 190.9,402.0" fill="none" stroke="#222" stroke-width="0.9"/><text x="169.5" y="409.8" fill="#000" stroke="#000" text-anchor="middle" font-size="7">2</text><text x="196.9" y="409.8" fill="#000" stroke="#000" text-anchor="middle" font-size="7">3</text><text transform="translate(159.8,419.0) rotate(-90)" fill="#000" stroke="#000" text-anchor="middle" font-size="7" textLength="9.5" lengthAdjust="spacing">L/B</text><text transform="translate(173.8,419.0) rotate(-90)" fill="#000" stroke="#000" text-anchor="middle" font-size="7" textLength="13.5" lengthAdjust="spacing">0.85</text><text transform="translate(187.0,418.3) rotate(-90)" fill="#000" stroke="#000" text-anchor="middle" font-size="7" textLength="18.4" lengthAdjust="spacing">0.85L</text><text transform="translate(159.8,467.0) rotate(-90)" fill="#000" stroke="#000" text-anchor="middle" font-size="7" textLength="9.5" lengthAdjust="spacing">L/B</text><text transform="translate(173.8,467.0) rotate(-90)" fill="#000" stroke="#000" text-anchor="middle" font-size="7" textLength="13.5" lengthAdjust="spacing">0.85</text><text transform="translate(187.0,465.0) rotate(-90)" fill="#000" stroke="#000" text-anchor="middle" font-size="7" textLength="18.4" lengthAdjust="spacing">0.85L</text><text x="70.2" y="439.2" fill="#0000f8" stroke="#0000f8" text-anchor="start" font-size="7" textLength="17.5" lengthAdjust="spacing">H204</text><text x="101.1" y="439.2" fill="#000" stroke="#000" text-anchor="middle" font-size="7">6</text><text x="171.0" y="439.2" fill="#000" stroke="#000" text-anchor="middle" font-size="7">7</text><text x="198.2" y="439.2" fill="#000" stroke="#000" text-anchor="middle" font-size="7">4</text><text x="242.0" y="439.2" fill="#000" stroke="#000" text-anchor="middle" font-size="7">2</text><text x="278.8" y="439.2" fill="#000" stroke="#000" text-anchor="middle" font-size="7">1</text><text x="286.6" y="434.9" fill="#000" stroke="#000" text-anchor="start" font-size="7" textLength="9.5" lengthAdjust="spacing" font-weight="bold">× 1</text><text transform="translate(268.1,320.7) rotate(-90)" fill="#000" stroke="#000" text-anchor="middle" font-size="7">J</text><text transform="translate(268.1,356.4) rotate(-90)" fill="#000" stroke="#000" text-anchor="middle" font-size="7" textLength="27.6" lengthAdjust="spacing">0.5LG/R</text><text transform="translate(231.0,463.3) rotate(-90)" fill="#000" stroke="#000" text-anchor="middle" font-size="7" textLength="8.5" lengthAdjust="spacing">BR</text><text transform="translate(244.0,463.3) rotate(-90)" fill="#000" stroke="#000" text-anchor="middle" font-size="7" textLength="10.0" lengthAdjust="spacing">0.5</text><text transform="translate(269.6,464.6) rotate(-90)" fill="#000" stroke="#000" text-anchor="middle" font-size="7" textLength="16.5" lengthAdjust="spacing">LG/R</text><text transform="translate(283.8,464.0) rotate(-90)" fill="#000" stroke="#000" text-anchor="middle" font-size="7" textLength="10.0" lengthAdjust="spacing">0.5</text><text x="129.5" y="487.2" fill="#000" stroke="#000" text-anchor="middle" font-size="7">A</text><text x="143.2" y="487.2" fill="#000" stroke="#000" text-anchor="middle" font-size="7">4</text><text x="156.1" y="487.2" fill="#000" stroke="#000" text-anchor="middle" font-size="7">A</text><text x="169.8" y="487.2" fill="#000" stroke="#000" text-anchor="middle" font-size="7">5</text><text x="183.0" y="487.2" fill="#000" stroke="#000" text-anchor="middle" font-size="7">A</text><text x="196.7" y="487.2" fill="#000" stroke="#000" text-anchor="middle" font-size="7">6</text><text x="211.1" y="487.2" fill="#000" stroke="#000" text-anchor="middle" font-size="7">A</text><text x="224.0" y="487.2" fill="#000" stroke="#000" text-anchor="middle" font-size="7">8</text><text x="265.1" y="487.2" fill="#000" stroke="#000" text-anchor="middle" font-size="7">A</text><text x="278.8" y="487.2" fill="#000" stroke="#000" text-anchor="middle" font-size="7">3</text><rect x="105.8" y="499.4" width="153.1" height="68" fill="none" stroke="#222" stroke-width="0.9"/><polyline points="105.8,513.1 258.9,513.1" fill="none" stroke="#222" stroke-width="0.9"/><polyline points="105.8,526.8 258.9,526.8" fill="none" stroke="#222" stroke-width="0.9"/><polyline points="105.8,540.4 258.9,540.4" fill="none" stroke="#222" stroke-width="0.9"/><polyline points="105.8,553.9 258.9,553.9" fill="none" stroke="#222" stroke-width="0.9"/><polyline points="122.7,499.4 122.7,567.4" fill="none" stroke="#222" stroke-width="0.9"/><polyline points="150.1,499.4 150.1,567.4" fill="none" stroke="#222" stroke-width="0.9"/><polyline points="177.5,499.4 177.5,567.4" fill="none" stroke="#222" stroke-width="0.9"/><polyline points="204.6,499.4 204.6,567.4" fill="none" stroke="#222" stroke-width="0.9"/><polyline points="231.5,499.4 231.5,567.4" fill="none" stroke="#222" stroke-width="0.9"/><polyline points="136.9,488.0 136.9,499.4" fill="none" stroke="#222" stroke-width="0.9"/><polyline points="163.6,488.0 163.6,499.4" fill="none" stroke="#222" stroke-width="0.9"/><polyline points="190.9,488.0 190.9,499.4" fill="none" stroke="#222" stroke-width="0.9"/><polyline points="218.6,488.0 218.6,499.4" fill="none" stroke="#222" stroke-width="0.9"/><polyline points="136.4,506.4 245.2,506.4" fill="none" stroke="#222" stroke-width="0.9"/><circle cx="136.4" cy="506.4" r="3" fill="#fffee6" stroke="#222" stroke-width="0.8"/><circle cx="218.1" cy="506.4" r="3" fill="#fffee6" stroke="#222" stroke-width="0.8"/><circle cx="245.2" cy="506.4" r="3" fill="#fffee6" stroke="#222" stroke-width="0.8"/><polyline points="163.6,520.1 245.2,520.1" fill="none" stroke="#222" stroke-width="0.9"/><circle cx="163.6" cy="520.1" r="3" fill="#fffee6" stroke="#222" stroke-width="0.8"/><circle cx="218.1" cy="520.1" r="3" fill="#fffee6" stroke="#222" stroke-width="0.8"/><circle cx="245.2" cy="520.1" r="3" fill="#fffee6" stroke="#222" stroke-width="0.8"/><polyline points="190.9,533.6 245.2,533.6" fill="none" stroke="#222" stroke-width="0.9"/><circle cx="190.9" cy="533.6" r="3" fill="#fffee6" stroke="#222" stroke-width="0.8"/><circle cx="218.1" cy="533.6" r="3" fill="#fffee6" stroke="#222" stroke-width="0.8"/><circle cx="245.2" cy="533.6" r="3" fill="#fffee6" stroke="#222" stroke-width="0.8"/><polyline points="218.1,547.2 245.2,547.2" fill="none" stroke="#222" stroke-width="0.9"/><circle cx="218.1" cy="547.2" r="3" fill="#fffee6" stroke="#222" stroke-width="0.8"/><circle cx="245.2" cy="547.2" r="3" fill="#fffee6" stroke="#222" stroke-width="0.8"/><circle cx="245.2" cy="560.7" r="3" fill="#fffee6" stroke="#222" stroke-width="0.8"/><text x="107.3" y="509.1" fill="#000" stroke="#000" text-anchor="start" font-size="7" textLength="8.2" lengthAdjust="spacing">HI</text><text x="107.3" y="522.8" fill="#000" stroke="#000" text-anchor="start" font-size="7" textLength="10.5" lengthAdjust="spacing">M2</text><text x="107.3" y="536.1" fill="#000" stroke="#000" text-anchor="start" font-size="7" textLength="10.5" lengthAdjust="spacing">M1</text><text x="107.3" y="549.9" fill="#000" stroke="#000" text-anchor="start" font-size="7" textLength="8.8" lengthAdjust="spacing">LO</text><text x="107.3" y="563.3" fill="#000" stroke="#000" text-anchor="start" font-size="7" textLength="14.5" lengthAdjust="spacing">OFF</text><polyline points="245.2,567.4 245.2,575.6" fill="none" stroke="#222" stroke-width="0.9"/><polyline points="272.6,488.0 272.6,575.6" fill="none" stroke="#222" stroke-width="0.9"/><circle cx="272.6" cy="533.5" r="6.2" fill="#fffee6" stroke="#222" stroke-width="0.8"/><circle cx="272.6" cy="533.5" r="3.6" fill="none" stroke="#222" stroke-width="0.7"/><ellipse cx="272.8" cy="533.6" rx="2.2" ry="0.9" fill="none" stroke="#222" stroke-width="0.7"/><polyline points="300.0,513.8 290.4,513.8 290.4,518.8 293.2,520.5 289.4,523.2 293.6,525.6 289.4,528.0 293.6,530.5 289.4,533.0 290.4,534.2 290.4,541.2 300.0,541.2" fill="none" stroke="#222" stroke-width="0.9"/><polyline points="293.4,534.4 286.8,517.4" fill="none" stroke="#222" stroke-width="0.8"/><polygon points="285.9,515.6 288.6,517.6 286.2,518.9" fill="#111"/><polyline points="286.4,533.2 289.6,528.4" fill="none" stroke="#222" stroke-width="0.8"/><text x="304.9" y="509.9" fill="#000" stroke="#000" text-anchor="middle" font-size="7">B</text><text x="304.9" y="523.8" fill="#000" stroke="#000" text-anchor="middle" font-size="7">1</text><text x="304.9" y="536.8" fill="#000" stroke="#000" text-anchor="middle" font-size="7">B</text><text x="304.9" y="550.9" fill="#000" stroke="#000" text-anchor="middle" font-size="7">2</text><text x="318.1" y="536.8" fill="#000" stroke="#000" text-anchor="start" font-size="7" textLength="15.4" lengthAdjust="spacing">0.3G</text><text x="93.9" y="584.8" fill="#000" stroke="#000" text-anchor="start" font-size="7" textLength="46.8" lengthAdjust="spacing">Control Lever</text><text x="179.4" y="584.8" fill="#000" stroke="#000" text-anchor="start" font-size="7" textLength="7.0" lengthAdjust="spacing">A :</text><text x="187.7" y="584.8" fill="#0000f8" stroke="#0000f8" text-anchor="start" font-size="7" textLength="17.0" lengthAdjust="spacing">B160</text><text x="179.4" y="591.8" fill="#000" stroke="#000" text-anchor="start" font-size="7" textLength="7.0" lengthAdjust="spacing">B :</text><text x="187.7" y="591.8" fill="#0000f8" stroke="#0000f8" text-anchor="start" font-size="7" textLength="17.0" lengthAdjust="spacing">B394</text><text x="237.7" y="583.1" fill="#000" stroke="#000" text-anchor="middle" font-size="7">A</text><text x="251.4" y="583.1" fill="#000" stroke="#000" text-anchor="middle" font-size="7">1</text><text x="264.6" y="583.1" fill="#000" stroke="#000" text-anchor="middle" font-size="7">A</text><text x="278.8" y="583.1" fill="#000" stroke="#000" text-anchor="middle" font-size="7">2</text><text x="276.8" y="592.3" fill="#000" stroke="#000" text-anchor="start" font-size="7" textLength="19.4" lengthAdjust="spacing">0.85B</text><text transform="translate(240.7,609.0) rotate(-90)" fill="#000" stroke="#000" text-anchor="middle" font-size="7" textLength="19.0" lengthAdjust="spacing">0.85B</text><text x="308.7" y="591.0" fill="#0000f8" stroke="#0000f8" text-anchor="start" font-size="7" textLength="18.1" lengthAdjust="spacing">H204</text><text x="319.6" y="579.8" fill="#000" stroke="#000" text-anchor="start" font-size="7" textLength="9.5" lengthAdjust="spacing" font-weight="bold">× 1</text><text x="312.4" y="606.0" fill="#000" stroke="#000" text-anchor="middle" font-size="7">3</text><text x="312.4" y="632.8" fill="#000" stroke="#000" text-anchor="middle" font-size="7">8</text><text x="332.3" y="592.3" fill="#000" stroke="#000" text-anchor="start" font-size="7" textLength="19.2" lengthAdjust="spacing">0.85B</text><text x="332.3" y="618.9" fill="#000" stroke="#000" text-anchor="start" font-size="7" textLength="19.2" lengthAdjust="spacing">0.85B</text><text transform="translate(349.8,485.7) rotate(-90)" fill="#000" stroke="#000" text-anchor="middle" font-size="7" textLength="14.5" lengthAdjust="spacing">0.5B</text><text x="428.3" y="330.2" fill="#0000f8" stroke="#0000f8" text-anchor="start" font-size="7" textLength="16.7" lengthAdjust="spacing">B158</text><text x="411.9" y="322.9" fill="#000" stroke="#000" text-anchor="middle" font-size="7">6</text><text x="430.8" y="347.8" fill="#000" stroke="#000" text-anchor="middle" font-size="7">4</text><text x="398.4" y="359.0" fill="#000" stroke="#000" text-anchor="middle" font-size="7">5</text><text transform="translate(381.5,338.0) rotate(-90)" fill="#000" stroke="#000" text-anchor="middle" font-size="7" textLength="26.8" lengthAdjust="spacing">A/C SW</text><text transform="translate(451.2,359.5) rotate(-90)" fill="#000" stroke="#000" text-anchor="middle" font-size="7" textLength="32.4" lengthAdjust="spacing">0.85BR/R</text><text transform="translate(387.3,366.2) rotate(-90)" fill="#000" stroke="#000" text-anchor="middle" font-size="7" textLength="19.0" lengthAdjust="spacing">0.85B</text><text x="367.8" y="398.8" fill="#0000f8" stroke="#0000f8" text-anchor="start" font-size="7" textLength="18.2" lengthAdjust="spacing">H205</text><text x="397.7" y="398.8" fill="#000" stroke="#000" text-anchor="middle" font-size="7">5</text><text x="461.9" y="398.8" fill="#000" stroke="#000" text-anchor="middle" font-size="7">1</text><text x="469.0" y="385.9" fill="#000" stroke="#000" text-anchor="start" font-size="7" textLength="9.5" lengthAdjust="spacing" font-weight="bold">× 1</text><text transform="translate(451.2,418.7) rotate(-90)" fill="#000" stroke="#000" text-anchor="middle" font-size="7" textLength="15.5" lengthAdjust="spacing">BR/R</text><text transform="translate(465.2,420.0) rotate(-90)" fill="#000" stroke="#000" text-anchor="middle" font-size="7" textLength="13.5" lengthAdjust="spacing">0.85</text><text x="448.2" y="437.2" fill="#000" stroke="#000" text-anchor="middle" font-size="7">A</text><text x="460.7" y="437.2" fill="#000" stroke="#000" text-anchor="middle" font-size="7">4</text><text x="481.1" y="427.5" fill="#000" stroke="#000" text-anchor="start" font-size="7" textLength="7.0" lengthAdjust="spacing">A :</text><text x="490.0" y="427.5" fill="#0000f8" stroke="#0000f8" text-anchor="start" font-size="7" textLength="17.2" lengthAdjust="spacing">B189</text><text x="481.1" y="434.9" fill="#000" stroke="#000" text-anchor="start" font-size="7" textLength="7.0" lengthAdjust="spacing">B :</text><text x="490.0" y="434.9" fill="#0000f8" stroke="#0000f8" text-anchor="start" font-size="7" textLength="17.2" lengthAdjust="spacing">B395</text><text x="510.9" y="447.2" fill="#000" stroke="#000" text-anchor="middle" font-size="7">A</text><text x="510.9" y="462.1" fill="#000" stroke="#000" text-anchor="middle" font-size="7">3</text><text transform="translate(413.4,452.0) rotate(-90)" fill="#000" stroke="#000" text-anchor="middle" font-size="7" textLength="32.0" lengthAdjust="spacing">Electronic</text><text transform="translate(422.1,451.0) rotate(-90)" fill="#000" stroke="#000" text-anchor="middle" font-size="7" textLength="37.4" lengthAdjust="spacing">Thermostat</text><text x="431.5" y="473.3" fill="#000" stroke="#000" text-anchor="middle" font-size="7">B</text><text x="445.0" y="473.3" fill="#000" stroke="#000" text-anchor="middle" font-size="7">1</text><text x="458.7" y="473.3" fill="#000" stroke="#000" text-anchor="middle" font-size="7">B</text><text x="471.9" y="473.3" fill="#000" stroke="#000" text-anchor="middle" font-size="7">2</text><text x="484.8" y="473.3" fill="#000" stroke="#000" text-anchor="middle" font-size="7">A</text><text x="500.0" y="473.3" fill="#000" stroke="#000" text-anchor="middle" font-size="7">5</text><text transform="translate(435.0,496.2) rotate(-90)" fill="#000" stroke="#000" text-anchor="middle" font-size="7" textLength="13.5" lengthAdjust="spacing">0.3L</text><text transform="translate(461.9,506.1) rotate(-90)" fill="#000" stroke="#000" text-anchor="middle" font-size="7" textLength="15.5" lengthAdjust="spacing">0.3W</text><text transform="translate(387.3,483.2) rotate(-90)" fill="#000" stroke="#000" text-anchor="middle" font-size="7" textLength="19.0" lengthAdjust="spacing">0.85B</text><text x="542.0" y="447.9" fill="#000" stroke="#000" text-anchor="start" font-size="7" textLength="21.1" lengthAdjust="spacing">0.5GY</text><text x="430.8" y="528.8" fill="#0000f8" stroke="#0000f8" text-anchor="start" font-size="7" textLength="16.9" lengthAdjust="spacing">B396</text><text x="473.1" y="528.8" fill="#000" stroke="#000" text-anchor="middle" font-size="7">2</text><text x="427.1" y="550.9" fill="#000" stroke="#000" text-anchor="middle" font-size="7">1</text><text x="440.3" y="558.7" fill="#000" stroke="#000" text-anchor="start" font-size="7" textLength="36.0" lengthAdjust="spacing">Fin Sensor</text><text x="332.0" y="592.3" fill="#000" stroke="#000" text-anchor="start" font-size="7"></text><text transform="translate(387.8,617.9) rotate(-90)" fill="#000" stroke="#000" text-anchor="middle" font-size="7" textLength="19.0" lengthAdjust="spacing">0.85B</text><text transform="translate(387.8,649.5) rotate(-90)" fill="#000" stroke="#000" text-anchor="middle" font-size="7" textLength="19.0" lengthAdjust="spacing">0.85B</text><text transform="translate(386.8,673.6) rotate(-90)" fill="#000" stroke="#000" text-anchor="middle" font-size="7" textLength="8.5" lengthAdjust="spacing">3B</text><text transform="translate(420.9,673.6) rotate(-90)" fill="#000" stroke="#000" text-anchor="middle" font-size="7" textLength="8.5" lengthAdjust="spacing">3B</text><text x="402.2" y="658.7" fill="#000" stroke="#000" text-anchor="start" font-size="7" textLength="8.7" lengthAdjust="spacing">3B</text><text transform="translate(385.5,633.3) rotate(-90)" fill="#000" stroke="#000" text-anchor="middle" font-size="7">J</text><text transform="translate(385.5,662.7) rotate(-90)" fill="#000" stroke="#000" text-anchor="middle" font-size="7">J</text><text transform="translate(401.7,597.2) rotate(-90)" fill="#000" stroke="#000" text-anchor="middle" font-size="7">J</text><text transform="translate(435.3,662.7) rotate(-90)" fill="#000" stroke="#000" text-anchor="middle" font-size="7">J</text><text transform="translate(489.3,604.0) rotate(-90)" fill="#000" stroke="#000" text-anchor="middle" font-size="7">J</text><text transform="translate(503.5,651.3) rotate(-90)" fill="#000" stroke="#000" text-anchor="middle" font-size="7">J</text><text transform="translate(488.8,583.0) rotate(-90)" fill="#000" stroke="#000" text-anchor="middle" font-size="7" textLength="14.5" lengthAdjust="spacing">0.5B</text><text transform="translate(488.8,626.6) rotate(-90)" fill="#000" stroke="#000" text-anchor="middle" font-size="7" textLength="14.5" lengthAdjust="spacing">0.5B</text><text transform="translate(461.9,668.7) rotate(-90)" fill="#000" stroke="#000" text-anchor="middle" font-size="7" textLength="8.5" lengthAdjust="spacing">2B</text><text transform="translate(488.8,668.7) rotate(-90)" fill="#000" stroke="#000" text-anchor="middle" font-size="7" textLength="8.5" lengthAdjust="spacing">2B</text><circle cx="391.2" cy="682.4" r="3.1" fill="#000" stroke="#fff" stroke-width="1"/><polyline points="382.2,685.2 400.2,685.2" fill="none" stroke="#111" stroke-width="1.3"/><polyline points="385.8,688.4 396.6,688.4" fill="none" stroke="#111" stroke-width="1.3"/><polyline points="388.6,691.8 393.8,691.8" fill="none" stroke="#111" stroke-width="1.3"/><text x="391.2" y="700.8" fill="#0000f8" stroke="#0000f8" text-anchor="middle" font-size="7" textLength="13.5" lengthAdjust="spacing">FFL</text><circle cx="425.6" cy="682.4" r="3.1" fill="#000" stroke="#fff" stroke-width="1"/><polyline points="416.6,685.2 434.6,685.2" fill="none" stroke="#111" stroke-width="1.3"/><polyline points="420.2,688.4 431.0,688.4" fill="none" stroke="#111" stroke-width="1.3"/><polyline points="423.0,691.8 428.2,691.8" fill="none" stroke="#111" stroke-width="1.3"/><text x="425.6" y="700.8" fill="#0000f8" stroke="#0000f8" text-anchor="middle" font-size="7" textLength="14.5" lengthAdjust="spacing">FFR</text><circle cx="466.1" cy="682.4" r="3.1" fill="#000" stroke="#fff" stroke-width="1"/><polyline points="457.1,685.2 475.1,685.2" fill="none" stroke="#111" stroke-width="1.3"/><polyline points="460.7,688.4 471.5,688.4" fill="none" stroke="#111" stroke-width="1.3"/><polyline points="463.5,691.8 468.7,691.8" fill="none" stroke="#111" stroke-width="1.3"/><text x="466.1" y="700.8" fill="#0000f8" stroke="#0000f8" text-anchor="middle" font-size="7" textLength="15.0" lengthAdjust="spacing">CFL</text><circle cx="493.5" cy="682.4" r="3.1" fill="#000" stroke="#fff" stroke-width="1"/><polyline points="484.5,685.2 502.5,685.2" fill="none" stroke="#111" stroke-width="1.3"/><polyline points="488.1,688.4 498.9,688.4" fill="none" stroke="#111" stroke-width="1.3"/><polyline points="490.9,691.8 496.1,691.8" fill="none" stroke="#111" stroke-width="1.3"/><text x="493.5" y="700.8" fill="#0000f8" stroke="#0000f8" text-anchor="middle" font-size="7" textLength="15.5" lengthAdjust="spacing">CFR</text><circle cx="689.9" cy="682.4" r="3.1" fill="#000" stroke="#fff" stroke-width="1"/><polyline points="680.9,685.2 698.9,685.2" fill="none" stroke="#111" stroke-width="1.3"/><polyline points="684.5,688.4 695.3,688.4" fill="none" stroke="#111" stroke-width="1.3"/><polyline points="687.3,691.8 692.5,691.8" fill="none" stroke="#111" stroke-width="1.3"/><text x="689.9" y="700.8" fill="#0000f8" stroke="#0000f8" text-anchor="middle" font-size="7" textLength="14.0" lengthAdjust="spacing">FSL</text><circle cx="742.8" cy="682.4" r="3.1" fill="#000" stroke="#fff" stroke-width="1"/><polyline points="733.8,685.2 751.8,685.2" fill="none" stroke="#111" stroke-width="1.3"/><polyline points="737.4,688.4 748.2,688.4" fill="none" stroke="#111" stroke-width="1.3"/><polyline points="740.2,691.8 745.4,691.8" fill="none" stroke="#111" stroke-width="1.3"/><text x="742.8" y="700.8" fill="#0000f8" stroke="#0000f8" text-anchor="middle" font-size="7" textLength="14.0" lengthAdjust="spacing">FFC</text><text x="540.3" y="161.1" fill="#0000f8" stroke="#0000f8" text-anchor="start" font-size="7" textLength="41.1" lengthAdjust="spacing">CHASS R/B</text><text x="705.0" y="149.9" fill="#000" stroke="#000" text-anchor="start" font-size="7" textLength="93.3" lengthAdjust="spacing">× 1: With Extension Harness</text><rect x="584.3" y="209.5" width="75.2" height="27.0" fill="#fffee6" stroke="#1a1a1a" stroke-width="1.3"/><rect x="691.3" y="209.4" width="75.3" height="27.6" fill="#fffee6" stroke="#1a1a1a" stroke-width="1.3"/><polyline points="539.0,170.5 551.9,170.5 551.9,192.2 559.9,192.2 559.9,187.0" fill="none" stroke="#222" stroke-width="0.9"/><circle cx="559.9" cy="171.5" r="1.7" fill="#fffee6" stroke="#222" stroke-width="0.8"/><circle cx="559.9" cy="185.3" r="1.7" fill="#fffee6" stroke="#222" stroke-width="0.8"/><path d="M559.9 173.2 C557.7 174.5 557.7 177.4 559.9 178.4 S562.1 182.3 559.9 183.6" fill="none" stroke="#222" stroke-width="0.9"/><circle cx="621.8" cy="171.5" r="1.7" fill="#fffee6" stroke="#222" stroke-width="0.8"/><circle cx="621.8" cy="185.3" r="1.7" fill="#fffee6" stroke="#222" stroke-width="0.8"/><path d="M621.8 173.2 C619.6 174.5 619.6 177.4 621.8 178.4 S624.0 182.3 621.8 183.6" fill="none" stroke="#222" stroke-width="0.9"/><text x="563.1" y="172.8" fill="#000" stroke="#000" text-anchor="start" font-size="7" textLength="22.5" lengthAdjust="spacing">SBF10</text><text x="563.1" y="181.0" fill="#000" stroke="#000" text-anchor="start" font-size="7" textLength="47.0" lengthAdjust="spacing">Wiper&amp;HVAC</text><text x="563.1" y="189.2" fill="#000" stroke="#000" text-anchor="start" font-size="7" textLength="38.5" lengthAdjust="spacing">60A (BAT)</text><text x="625.8" y="172.8" fill="#000" stroke="#000" text-anchor="start" font-size="7" textLength="14.4" lengthAdjust="spacing">OF7</text><text x="625.8" y="181.0" fill="#000" stroke="#000" text-anchor="start" font-size="7" textLength="12.2" lengthAdjust="spacing">A/C</text><text x="625.8" y="189.2" fill="#000" stroke="#000" text-anchor="start" font-size="7" textLength="37.0" lengthAdjust="spacing">10A (BAT)</text><polyline points="621.8,187.0 621.8,194.7 728.6,194.7 728.6,216.4" fill="none" stroke="#222" stroke-width="0.9"/><circle cx="635.5" cy="194.7" r="1.6" fill="#000"/><polyline points="635.5,194.7 635.5,216.4" fill="none" stroke="#222" stroke-width="0.9"/><polyline points="594.7,209.6 594.7,217.6" fill="none" stroke="#222" stroke-width="0.9"/><polyline points="594.7,228.6 594.7,236.6" fill="none" stroke="#222" stroke-width="0.9"/><path d="M594.7 217.6 C598.3 217.9 598.3 221.9 595.1 222.3 M595.1 223.9 C598.3 224.3 598.3 228.3 594.7 228.6" fill="none" stroke="#222" stroke-width="0.9"/><ellipse cx="594.0" cy="223.1" rx="2.5" ry="1.9" fill="none" stroke="#222" stroke-width="0.9"/><ellipse cx="594.1" cy="223.1" rx="1" ry="0.8" fill="none" stroke="#222" stroke-width="0.7"/><polyline points="594.7,209.6 594.7,202.9 551.7,202.9 551.7,251.2 539.0,251.2" fill="none" stroke="#222" stroke-width="0.9"/><polyline points="594.7,236.6 594.7,256.2" fill="none" stroke="#222" stroke-width="0.9"/><circle cx="635.5" cy="217.9" r="1.7" fill="#fffee6" stroke="#222" stroke-width="0.8"/><circle cx="649.0" cy="228.1" r="1.7" fill="#fffee6" stroke="#222" stroke-width="0.8"/><circle cx="621.8" cy="228.1" r="1.7" fill="#fffee6" stroke="#222" stroke-width="0.8"/><polyline points="636.5,219.0 648.0,227.0" fill="none" stroke="#222" stroke-width="0.9"/><polyline points="649.0,229.6 649.0,236.6" fill="none" stroke="#222" stroke-width="0.9"/><polyline points="621.8,229.6 621.8,247.5 679.3,247.5 679.3,202.4 701.7,202.4 701.7,209.6" fill="none" stroke="#222" stroke-width="0.9"/><circle cx="635.5" cy="247.5" r="1.6" fill="#000"/><polyline points="635.5,247.5 635.5,256.2" fill="none" stroke="#222" stroke-width="0.9"/><polyline points="701.7,209.6 701.7,217.8" fill="none" stroke="#222" stroke-width="0.9"/><polyline points="701.7,228.8 701.7,237.0" fill="none" stroke="#222" stroke-width="0.9"/><path d="M701.7 217.8 C705.3 218.1 705.3 222.1 702.1 222.5 M702.1 224.1 C705.3 224.5 705.3 228.5 701.7 228.8" fill="none" stroke="#222" stroke-width="0.9"/><ellipse cx="701.0" cy="223.3" rx="2.5" ry="1.9" fill="none" stroke="#222" stroke-width="0.9"/><ellipse cx="701.1" cy="223.3" rx="1" ry="0.8" fill="none" stroke="#222" stroke-width="0.7"/><polyline points="701.7,237.0 701.7,256.2" fill="none" stroke="#222" stroke-width="0.9"/><circle cx="728.6" cy="217.9" r="1.7" fill="#fffee6" stroke="#222" stroke-width="0.8"/><circle cx="756.0" cy="217.9" r="1.7" fill="#fffee6" stroke="#222" stroke-width="0.8"/><circle cx="742.3" cy="228.1" r="1.7" fill="#fffee6" stroke="#222" stroke-width="0.8"/><polyline points="755.0,219.0 743.3,227.0" fill="none" stroke="#222" stroke-width="0.9"/><polyline points="756.0,216.4 756.0,209.6" fill="none" stroke="#222" stroke-width="0.9"/><polyline points="742.3,229.6 742.3,256.2" fill="none" stroke="#222" stroke-width="0.9"/><text x="599.2" y="207.9" fill="#000" stroke="#000" text-anchor="middle" font-size="7">5</text><text x="639.0" y="207.9" fill="#000" stroke="#000" text-anchor="middle" font-size="7">2</text><text x="599.2" y="243.7" fill="#000" stroke="#000" text-anchor="middle" font-size="7">3</text><text x="625.8" y="243.7" fill="#000" stroke="#000" text-anchor="middle" font-size="7">1</text><text x="652.7" y="243.7" fill="#000" stroke="#000" text-anchor="middle" font-size="7">4</text><text x="706.2" y="207.9" fill="#000" stroke="#000" text-anchor="middle" font-size="7">3</text><text x="733.1" y="207.9" fill="#000" stroke="#000" text-anchor="middle" font-size="7">2</text><text x="759.7" y="207.9" fill="#000" stroke="#000" text-anchor="middle" font-size="7">4</text><text x="706.2" y="245.0" fill="#000" stroke="#000" text-anchor="middle" font-size="7">5</text><text x="747.0" y="245.0" fill="#000" stroke="#000" text-anchor="middle" font-size="7">1</text><text transform="translate(566.1,237.5) rotate(-90)" fill="#000" stroke="#000" text-anchor="middle" font-size="7" textLength="13.5" lengthAdjust="spacing">OR4</text><text transform="translate(573.5,238.0) rotate(-90)" fill="#000" stroke="#000" text-anchor="middle" font-size="7" textLength="12.0" lengthAdjust="spacing">A/C</text><text transform="translate(581.5,224.8) rotate(-90)" fill="#000" stroke="#000" text-anchor="middle" font-size="7" textLength="40.0" lengthAdjust="spacing">Compressor</text><text transform="translate(775.2,230.5) rotate(-90)" fill="#000" stroke="#000" text-anchor="middle" font-size="7" textLength="13.5" lengthAdjust="spacing">OR5</text><text transform="translate(783.1,219.8) rotate(-90)" fill="#000" stroke="#000" text-anchor="middle" font-size="7" textLength="35.4" lengthAdjust="spacing">Condenser</text><text transform="translate(791.3,232.0) rotate(-90)" fill="#000" stroke="#000" text-anchor="middle" font-size="7" textLength="10.6" lengthAdjust="spacing">Fan</text><text transform="translate(591.5,280.6) rotate(-90)" fill="#000" stroke="#000" text-anchor="middle" font-size="7" textLength="24.6" lengthAdjust="spacing">0.85GY</text><text x="576.5" y="309.7" fill="#0000f8" stroke="#0000f8" text-anchor="start" font-size="7" textLength="13.2" lengthAdjust="spacing">H42</text><text x="600.4" y="309.7" fill="#000" stroke="#000" text-anchor="start" font-size="7" textLength="7.0" lengthAdjust="spacing">13</text><text transform="translate(631.9,342.0) rotate(-90)" fill="#000" stroke="#000" text-anchor="middle" font-size="7" textLength="18.4" lengthAdjust="spacing">0.85L</text><text transform="translate(698.0,342.8) rotate(-90)" fill="#000" stroke="#000" text-anchor="middle" font-size="7" textLength="26.4" lengthAdjust="spacing">0.85B/G</text><text transform="translate(739.1,314.4) rotate(-90)" fill="#000" stroke="#000" text-anchor="middle" font-size="7" textLength="13.5" lengthAdjust="spacing">0.85</text><text transform="translate(738.9,300.6) rotate(-90)" fill="#ff1a1a" stroke="#ff1a1a" text-anchor="middle" font-size="8" textLength="11.5" lengthAdjust="spacing" font-weight="bold">L/B</text><polyline points="742.8,347.7 742.8,351.0" fill="none" stroke="#222" stroke-width="0.9"/><polyline points="742.8,371.4 742.8,374.4" fill="none" stroke="#222" stroke-width="0.9"/><rect x="739.8" y="351" width="6" height="5" fill="none" stroke="#333" stroke-width="0.7"/><rect x="739.8" y="366.4" width="6" height="5" fill="none" stroke="#333" stroke-width="0.7"/><circle cx="742.8" cy="361.2" r="5.6" fill="#fffee6" stroke="#333" stroke-width="0.8"/><text x="742.8" y="363.9" fill="#333" stroke="#333" text-anchor="middle" font-size="7">M</text><text x="749.8" y="345.1" fill="#000" stroke="#000" text-anchor="middle" font-size="7">2</text><text x="755.2" y="352.8" fill="#0000f8" stroke="#0000f8" text-anchor="start" font-size="7" textLength="7.0" lengthAdjust="spacing">J4</text><text x="749.8" y="381.9" fill="#000" stroke="#000" text-anchor="middle" font-size="7">1</text><text transform="translate(730.4,358.8) rotate(-90)" fill="#000" stroke="#000" text-anchor="middle" font-size="7" textLength="33.7" lengthAdjust="spacing">Fan Motor</text><text transform="translate(739.1,428.0) rotate(-90)" fill="#000" stroke="#000" text-anchor="middle" font-size="7" textLength="19.0" lengthAdjust="spacing">0.85B</text><text x="642.0" y="415.0" fill="#000" stroke="#000" text-anchor="middle" font-size="7">1</text><text x="708.4" y="415.0" fill="#000" stroke="#000" text-anchor="middle" font-size="7">4</text><text x="710.9" y="422.0" fill="#0000f8" stroke="#0000f8" text-anchor="start" font-size="7" textLength="10.7" lengthAdjust="spacing">J55</text><text transform="translate(627.1,428.4) rotate(-90)" fill="#000" stroke="#000" text-anchor="middle" font-size="7" textLength="41.2" lengthAdjust="spacing">Pressure SW</text><text x="642.0" y="452.1" fill="#000" stroke="#000" text-anchor="middle" font-size="7">3</text><text x="708.7" y="452.1" fill="#000" stroke="#000" text-anchor="middle" font-size="7">2</text><text transform="translate(632.1,481.2) rotate(-90)" fill="#000" stroke="#000" text-anchor="middle" font-size="7" textLength="31.6" lengthAdjust="spacing">0.85BR/Y</text><text transform="translate(698.0,465.3) rotate(-90)" fill="#000" stroke="#000" text-anchor="middle" font-size="7" textLength="14.5" lengthAdjust="spacing">0.5B</text><text x="628.3" y="518.6" fill="#000" stroke="#000" text-anchor="middle" font-size="7">J</text><text x="651.2" y="518.8" fill="#000" stroke="#000" text-anchor="start" font-size="7" textLength="30.6" lengthAdjust="spacing">0.85BR/Y</text><text x="748.3" y="487.0" fill="#000" stroke="#000" text-anchor="start" font-size="7" textLength="19.4" lengthAdjust="spacing">WS10</text><text transform="translate(632.4,555.0) rotate(-90)" fill="#000" stroke="#000" text-anchor="middle" font-size="7" textLength="31.6" lengthAdjust="spacing">0.85BR/Y</text><text transform="translate(556.5,581.0) rotate(-90)" fill="#000" stroke="#000" text-anchor="middle" font-size="7" textLength="27.4" lengthAdjust="spacing">0.5BR/Y</text><text x="582.6" y="589.0" fill="#0000f8" stroke="#0000f8" text-anchor="start" font-size="7" textLength="12.4" lengthAdjust="spacing">H54</text><text x="605.8" y="589.0" fill="#000" stroke="#000" text-anchor="middle" font-size="7">7</text><text x="618.0" y="589.0" fill="#0000f8" stroke="#0000f8" text-anchor="start" font-size="7" textLength="13.1" lengthAdjust="spacing">H52</text><text x="641.6" y="589.0" fill="#000" stroke="#000" text-anchor="middle" font-size="7">7</text><text transform="translate(596.3,615.4) rotate(-90)" fill="#000" stroke="#000" text-anchor="middle" font-size="7" textLength="18.6" lengthAdjust="spacing">0.75P</text><text transform="translate(577.6,630.3) rotate(-90)" fill="#000" stroke="#000" text-anchor="middle" font-size="7" textLength="13.6" lengthAdjust="spacing">4JJ1</text><text transform="translate(632.4,618.4) rotate(-90)" fill="#000" stroke="#000" text-anchor="middle" font-size="7" textLength="31.6" lengthAdjust="spacing">0.75BR/Y</text><text transform="translate(659.8,628.4) rotate(-90)" fill="#000" stroke="#000" text-anchor="middle" font-size="7" textLength="16.2" lengthAdjust="spacing">4HK1</text><text x="554.0" y="671.9" fill="#000" stroke="#000" text-anchor="start" font-size="7" textLength="12.4" lengthAdjust="spacing">SIG</text><text x="564.0" y="662.0" fill="#000" stroke="#000" text-anchor="start" font-size="7" textLength="8.7" lengthAdjust="spacing">34</text><text x="583.9" y="670.2" fill="#0000f8" stroke="#0000f8" text-anchor="start" font-size="7" textLength="10.7" lengthAdjust="spacing">J14</text><text x="561.3" y="700.8" fill="#0000f8" stroke="#0000f8" text-anchor="middle" font-size="7" textLength="16.2" lengthAdjust="spacing">ECM</text><text x="641.9" y="652.0" fill="#000" stroke="#000" text-anchor="middle" font-size="7">1</text><text x="644.8" y="659.5" fill="#0000f8" stroke="#0000f8" text-anchor="start" font-size="7" textLength="8.0" lengthAdjust="spacing">E3</text><text transform="translate(613.0,665.8) rotate(-90)" fill="#000" stroke="#000" text-anchor="middle" font-size="7" textLength="56.0" lengthAdjust="spacing">A/C Compressor</text><polyline points="636.1,654.0 636.1,661.0" fill="none" stroke="#222" stroke-width="0.9"/><polyline points="636.1,674.0 636.1,684.8" fill="none" stroke="#222" stroke-width="0.9"/><path d="M636.1 661 c3 0 3 3.2 0 3.2 c3 0 3 3.2 0 3.2 c3 0 3 3.3 0 3.3 M636.1 664.2 c-2.4 0 -2.4 3.2 0 3.2 c-2.4 0 -2.4 3.3 0 3.3 v3.3" fill="none" stroke="#222" stroke-width="0.9"/><polyline points="618.5,656.8 622.5,656.8 624.2,661.0 626.0,656.8 630.0,656.8 628.0,667.6 630.0,678.6 626.0,678.6 624.2,674.4 622.5,678.6 618.5,678.6 620.5,667.6 618.5,656.8" fill="none" stroke="#222" stroke-width="0.8"/><polyline points="627.4,685.2 644.4,685.2" fill="none" stroke="#111" stroke-width="1.3"/><polyline points="630.6,688.4 641.4,688.4" fill="none" stroke="#111" stroke-width="1.3"/><polyline points="633.4,691.8 638.6,691.8" fill="none" stroke="#111" stroke-width="1.3"/><polyline points="689.6,575.6 689.6,603.0" fill="none" stroke="#222" stroke-width="0.9"/><polygon points="689.6,584.6 694.4,592.6 684.8,592.6" fill="#000"/><polyline points="684.6,584.6 694.6,584.6" fill="none" stroke="#000" stroke-width="1.2"/><text x="695.9" y="574.1" fill="#000" stroke="#000" text-anchor="middle" font-size="7">2</text><text x="699.1" y="583.1" fill="#0000f8" stroke="#0000f8" text-anchor="start" font-size="7" textLength="15.5" lengthAdjust="spacing">J201</text><text x="695.9" y="610.2" fill="#000" stroke="#000" text-anchor="middle" font-size="7">1</text><text transform="translate(685.2,636.3) rotate(-90)" fill="#000" stroke="#000" text-anchor="middle" font-size="7" textLength="19.0" lengthAdjust="spacing">0.85B</text><text x="694.2" y="656.2" fill="#000" stroke="#000" text-anchor="start" font-size="7" textLength="15.4" lengthAdjust="spacing">WS4</text><text transform="translate(685.2,669.4) rotate(-90)" fill="#000" stroke="#000" text-anchor="middle" font-size="7" textLength="8.5" lengthAdjust="spacing">3B</text><text transform="translate(739.0,647.8) rotate(-90)" fill="#000" stroke="#000" text-anchor="middle" font-size="7" textLength="19.8" lengthAdjust="spacing">1.25B</text></g></svg><div id="rp"></div><svg class="abs" style="left:0;top:0" width="1366" height="140"><polygon points="958,33 1312,33 1312,135 958,135" fill="#000"/><rect x="960" y="35" width="346" height="97" fill="#8c8c8c"/><polygon points="1306,35 1310,35 1306,39" fill="#8c8c8c"/><polygon points="960,132 964,132 960,135" fill="#8c8c8c"/><rect x="960" y="35" width="349" height="1" fill="#c0c0c0"/><rect x="960" y="35" width="1" height="99" fill="#c0c0c0"/><rect x="1310" y="35" width="2" height="100" fill="#a0a0a0"/><rect x="964" y="39" width="342" height="93" fill="#333"/><rect x="979" y="52.5" width="245.5" height="25" fill="#fff"/><rect x="1232.5" y="49.5" width="57.5" height="33.5" fill="#e1e1e1" stroke="#adadad" stroke-width="1"/><g><polygon points="1250,63 1254.5,59.2 1260.5,57.4 1263.4,58 1263,61.5 1257.5,65.6 1254.5,69.2" fill="#2c2c2c"/><polygon points="1259,58.2 1262.4,57 1265.8,61.6 1262.6,64" fill="#5a5a5a"/><polygon points="1265,61.4 1271.6,58.4 1273.2,59.8 1273,61.8 1266.6,64" fill="#181818"/><polygon points="1261.2,66 1266.6,62.8 1273,63.4 1273.2,68 1267.6,71.2 1264.8,72.6" fill="#222"/><ellipse cx="1251.9" cy="65.6" rx="3.2" ry="3.7" fill="#16163c"/><ellipse cx="1251.9" cy="65.7" rx="2.4" ry="2.9" fill="#3c3cc8"/><ellipse cx="1251.5" cy="65" rx="1.2" ry="1.4" fill="#5c5ce0"/><ellipse cx="1263.7" cy="68.2" rx="3.7" ry="4.3" fill="#14143a"/><ellipse cx="1263.7" cy="68.3" rx="2.8" ry="3.4" fill="#3838c4"/><ellipse cx="1263.2" cy="67.5" rx="1.4" ry="1.7" fill="#5c5ce2"/></g><rect x="1006.0" y="90.0" width="11.5" height="11.5" fill="#fff"/><path d="M1007.8 95.6 l3 3 l5 -5.6" fill="none" stroke="#222" stroke-width="1.2"/><rect x="1006.0" y="113.0" width="11.5" height="11.5" fill="#fff"/><path d="M1007.8 118.6 l3 3 l5 -5.6" fill="none" stroke="#222" stroke-width="1.2"/><rect x="1051.0" y="113.0" width="11.5" height="11.5" fill="#fff"/><path d="M1052.8 118.6 l3 3 l5 -5.6" fill="none" stroke="#222" stroke-width="1.2"/><rect x="1134.0" y="112.5" width="11.5" height="11.5" fill="#fff"/><path d="M1135.8 118.1 l3 3 l5 -5.6" fill="none" stroke="#222" stroke-width="1.2"/><text x="1029.6" y="99.9" font-family="Liberation Sans,sans-serif" font-size="15" fill="#fff" stroke="#fff" stroke-width="0.3" textLength="108" lengthAdjust="spacingAndGlyphs">การจับคู่ที่ถูกต้อง</text><text x="1029.6" y="125.5" font-family="Liberation Sans,sans-serif" font-size="15" fill="#fff" stroke="#fff" stroke-width="0.3" textLength="10.4" lengthAdjust="spacingAndGlyphs">ที่</text><text x="1074.6" y="125.5" font-family="Liberation Sans,sans-serif" font-size="15" fill="#fff" stroke="#fff" stroke-width="0.3" textLength="46" lengthAdjust="spacingAndGlyphs">ปลั๊กต่อ</text><text x="1157.5" y="125.5" font-family="Liberation Sans,sans-serif" font-size="15" fill="#fff" stroke="#fff" stroke-width="0.3" textLength="93.4" lengthAdjust="spacingAndGlyphs">การเดินสายไฟ</text></svg><div id="list"><svg class="abs" style="left:0;top:0" width="330" height="12"><text x="0.5" y="6.7" font-family="Liberation Sans,sans-serif" font-size="17" font-weight="bold" fill="#000" textLength="151" lengthAdjust="spacingAndGlyphs">&lt;&lt;ผังวงจรไฟฟ้า&gt;&gt;</text></svg><div class="l" style="top:10.5px"><span class="ls" style="letter-spacing:0.555px">[Diesel Power Distribution (Except ACC</span></div><div class="l" style="top:29.5px"><span class="ls" style="letter-spacing:0.736px">Relay and IG Main Relay)]</span></div><div class="l" style="top:48.5px"><span class="ls" style="letter-spacing:0.613px">[Diesel Power Distribution (With ACC</span></div><div class="l" style="top:67.5px"><span class="ls" style="letter-spacing:0.736px">Relay and IG Main Relay)]</span></div><div class="l" style="top:86.5px"><span class="ls" style="letter-spacing:0.505px">[CNG Power Distribution (Except ACC</span></div><div class="l" style="top:105.5px"><span class="ls" style="letter-spacing:0.736px">Relay and IG Main Relay)]</span></div><div class="l" style="top:124.5px"><span class="ls" style="letter-spacing:0.565px">[CNG Power Distribution (With ACC</span></div><div class="l" style="top:143.5px"><span class="ls" style="letter-spacing:0.736px">Relay and IG Main Relay)]</span></div><div class="l" style="top:162.5px"><span class="ls" style="letter-spacing:0.431px">[Diesel Fuse Load]</span></div><div class="l" style="top:181.5px"><span class="ls" style="letter-spacing:0.262px">[CNG Fuse Load]</span></div><div class="l" style="top:200.5px"><span class="ls" style="letter-spacing:0.517px">[Diesel Ground Distribution]</span></div><div class="l" style="top:219.5px"><span class="ls" style="letter-spacing:0.442px">[CNG Ground Distribution]</span></div><div class="l" style="top:238.5px"><span class="ls" style="letter-spacing:0.537px">[Diesel Engine Control (4JJ1)]</span></div><div class="l" style="top:257.5px"><span class="ls" style="letter-spacing:0.738px">[Diesel Engine Control (4HK1 M/T)]</span></div><div class="l" style="top:276.5px"><span class="ls" style="letter-spacing:0.509px">[Diesel Engine Control (4HK1</span></div><div class="l" style="top:295.5px"><span class="ls" style="letter-spacing:0.707px">Smoother)]</span></div><div class="l" style="top:314.5px"><span class="ls" style="letter-spacing:0.419px">[CNG Engine Control]</span></div><div class="l" style="top:333.5px"><span class="ls" style="letter-spacing:0.385px">[CNG Fuel]</span></div><div class="l" style="top:352.5px"><span class="ls" style="letter-spacing:0.637px">[Diesel Starter and Charging (4JJ1)]</span></div><div class="l" style="top:371.5px"><span class="ls" style="letter-spacing:0.614px">[Diesel Starter and Charging (4HK1</span></div><div class="l" style="top:390.5px"><span class="ls" style="letter-spacing:1.879px">M/T)]</span></div><div class="l" style="top:409.5px"><span class="ls" style="letter-spacing:0.614px">[Diesel Starter and Charging (4HK1</span></div><div class="l" style="top:428.5px"><span class="ls" style="letter-spacing:0.687px">Smoother)]</span></div><div class="l" style="top:447.5px"><span class="ls" style="letter-spacing:0.569px">[CNG Starter and Charging]</span></div><div class="l" style="top:466.5px"><span class="ls" style="letter-spacing:0.634px">[Diesel Smoother]</span></div><div class="l" style="top:485.5px"><span class="ls" style="letter-spacing:0.501px">[CNG PTO (Except ACC Relay and IG</span></div><div class="l" style="top:504.5px"><span class="ls" style="letter-spacing:0.771px">Main Relay)]</span></div><div class="l" style="top:523.5px"><span class="ls" style="letter-spacing:0.562px">[CNG PTO (With ACC Relay and IG Main</span></div><div class="l" style="top:542.5px"><span class="ls" style="letter-spacing:0.892px">Relay)]</span></div><div class="l" style="top:561.5px"><span class="ls" style="letter-spacing:0.585px">[Diesel Manual Air Conditioner (Except</span></div><div class="l" style="top:580.5px"><span class="ls" style="letter-spacing:0.912px">2014 Year Model)]</span></div></div><div class="abs" style="left:1292px;top:135px;width:17px;height:593px;background:#f0f0f0;border-left:1px solid #fff;border-right:1px solid #fff;border-top:1px solid #fff"></div><div class="abs" style="left:1293px;top:678px;width:15px;height:34px;background:#cdcdcd"></div><svg class="abs" style="left:1291.5px;top:135px" width="18" height="17"><path d="M6 11.6 L9.5 7 L13 11.6" fill="none" stroke="#505050" stroke-width="1.8"/></svg><div class="abs" style="left:958px;top:135px;width:2px;height:593px;background:#000"></div><div class="abs" style="left:960px;top:135px;width:1px;height:593px;background:#c0c0c0"></div><div class="abs" style="left:1309px;top:135px;width:1px;height:593px;background:#000"></div><div class="abs" style="left:1310px;top:135px;width:2px;height:593px;background:#b0b0b0"></div><div id="task"><svg class="abs" style="left:0;top:0" width="1366" height="40" viewBox="0 0 1366 40"><g fill="#fff"><polygon points="16,14.2 22.6,13.3 22.6,19.6 16,19.6"/><polygon points="23.6,13.1 32,12 32,19.6 23.6,19.6"/><polygon points="16,20.6 22.6,20.6 22.6,26.9 16,26"/><polygon points="23.6,20.6 32,20.6 32,28.2 23.6,27.1"/></g><circle cx="74.5" cy="17.5" r="4.9" fill="none" stroke="#fff" stroke-width="1.2"/><path d="M71 21.2 L64.4 27.8" stroke="#fff" stroke-width="1.4"/><rect x="114.6" y="13.6" width="10.8" height="12.8" fill="none" stroke="#fff" stroke-width="1.2"/><path d="M112.5 16 H110.5 V24 H112.5 M127.5 16 H129.5 V24 H127.5" fill="none" stroke="#fff" stroke-width="1.2"/><g transform="translate(161,9.2) scale(1,1.07)"><path d="M0.6 10.4 C0.8 4.4 5 0.2 10.4 0.2 C16.2 0.2 19.6 4.4 19.6 9.6 V11.8 H6.6 C6.8 14.6 9.2 16.2 12.2 16.2 C14.6 16.2 16.6 15.6 18.4 14.6 V18.6 C16.6 19.6 14.2 20.2 11.6 20.2 C5.6 20.2 2 16.4 2 11.2 C2 8.2 3.4 5.8 5.6 4.4 C3.2 5.4 1.4 7.4 0.6 10.4 Z M6.8 8.2 H13.8 C13.8 6 12.6 4.4 10.4 4.4 C8.4 4.4 7.2 6 6.8 8.2 Z" fill="#1a7fd8"/></g><g transform="translate(219.6,19.9) scale(1.04)"><circle r="10.6" fill="#e33b2e"/><path d="M0 0 L-9.18 -5.3 A10.6 10.6 0 0 0 -0.9 10.56 L4.2 2.4 Z" fill="#2ba24c"/><path d="M0 0 L-0.9 10.56 A10.6 10.6 0 0 0 9.18 -5.3 L0 -5.3 Z" fill="#fbc116"/><circle r="4.9" fill="#fff"/><circle r="3.9" fill="#4a8af4"/></g><g transform="translate(258,10.4) scale(1,1.03)"><path d="M0.5 2 H8 L10 4 H21.5 V17.5 H0.5 Z" fill="#f7d36a"/><path d="M0.5 5.5 H21.5 V17.5 H0.5 Z" fill="#fbe28e"/><path d="M5 11 H17 V17.5 H14 V14 H8 V17.5 H5 Z" fill="#2e9ae6"/></g><g transform="translate(307,8.2)"><path d="M6.2 5.5 C6.4 1.6 8.4 0.6 10.4 0.6 C12.4 0.6 14 2 14.2 5" fill="none" stroke="#fff" stroke-width="1"/><polygon points="0.6,5.6 20.6,4.4 20.6,23.6 0.6,21.6" fill="#fff"/><g fill="#04060b"><polygon points="4.6,9.6 9.4,9.2 9.4,13 4.6,13"/><polygon points="10.6,9.1 16,8.7 16,13 10.6,13"/><polygon points="4.6,14.2 9.4,14.2 9.4,18.2 4.6,17.8"/><polygon points="10.6,14.2 16,14.2 16,18.8 10.6,18.3"/></g></g><g transform="translate(355,8)"><rect x="0" y="0" width="24" height="24" rx="4" fill="#00b900"/><path d="M12 4.4 C6.8 4.4 3 7.6 3 11.4 C3 14.8 6 17.6 10.2 18.2 C10.6 18.3 10.9 18.5 10.8 19 L10.6 20.4 C10.5 21 11 21.1 11.5 20.8 C13.5 19.6 19 16.6 20.4 13.6 C20.8 12.9 21 12.2 21 11.4 C21 7.6 17.2 4.4 12 4.4 Z" fill="#fff"/><text x="12" y="13.6" font-family="Liberation Sans,sans-serif" font-weight="bold" font-size="5.2" fill="#00b900" text-anchor="middle">LINE</text></g><g><polygon points="404.3,11.8 422.2,8.6 426,24.7 408.1,28.5" fill="#98a64c"/><path d="M405.6 17 Q413 11.6 422.8 12.6 M406.6 21.4 Q415 14.8 424 17.6" fill="none" stroke="#c9d38e" stroke-width="1.5"/></g><g transform="translate(453,8)"><rect x="0" y="0" width="24" height="24" fill="#5a8fd0"/><polygon points="0,13 24,13 24,24 0,24" fill="#2f7a3a"/><polygon points="5.5,24 8.6,11 10.6,11 12.6,24" fill="#25304e"/><path d="M9.2 13 V24" stroke="#e8e8e8" stroke-width="0.8" stroke-dasharray="1.6 1.6"/><rect x="14.8" y="15" width="1.4" height="9" fill="#bbb"/><circle cx="15.4" cy="8.6" r="7.3" fill="#fff" stroke="#e8202a" stroke-width="1.9"/><path d="M15.4 8.6 c-1.6 -2.6 -4.8 -2.6 -4.8 0 c0 2.6 3.2 2.6 4.8 0 c1.6 -2.6 4.8 -2.6 4.8 0 c0 2.6 -3.2 2.6 -4.8 0 Z" fill="none" stroke="#111" stroke-width="1.5"/></g><g transform="translate(502,8)"><rect x="0" y="0" width="24" height="24" fill="#f2f2f2"/><g font-family="Liberation Sans,sans-serif" font-weight="bold" font-size="5"><text x="1.6" y="5.6" fill="#2040c0">6E</text><text x="9" y="5.6" fill="#d02020">21</text><text x="16" y="8.6" fill="#2040c0">65</text><text x="3" y="11" fill="#2040c0">2E</text><text x="16" y="14" fill="#d02020">32</text><text x="3.6" y="20.4" fill="#d02020">48 5E</text></g><polygon points="1.6,16.8 14.6,2.6 13.2,16.4" fill="#9a9a9a"/><polygon points="14.6,2.6 15.4,12.6 10,9" fill="#dcdcdc"/></g><rect x="539" y="0" width="48" height="40" fill="#2c2f35"/><rect x="539" y="38" width="48" height="2" fill="#76b9ed"/><g transform="translate(551,8)"><rect x="0" y="0" width="24" height="24" fill="#fff"/><text x="1.2" y="6.6" font-family="Liberation Sans,sans-serif" font-weight="bold" font-size="5" fill="#222">G</text><text x="1" y="19.8" font-family="Liberation Sans,sans-serif" font-size="18" fill="#d02020" textLength="22.4" lengthAdjust="spacingAndGlyphs">IDSS</text></g><path d="M1123.5 21.5 L1129 16 L1134.5 21.5" fill="none" stroke="#fff" stroke-width="1.2"/><g fill="none" stroke="#8c8c8c" stroke-width="1.2"><path d="M1155.6 25.3 A3.6 3.6 0 0 1 1159.2 21.7"/><path d="M1152.6 25.3 A6.6 6.6 0 0 1 1159.2 18.7"/><path d="M1149.6 25.3 A9.6 9.6 0 0 1 1159.2 15.7"/></g><circle cx="1158.6" cy="24.8" r="1" fill="#8c8c8c"/><text x="1144.4" y="22.6" font-family="Liberation Sans,sans-serif" font-size="13" fill="#fff">*</text><rect x="1170.5" y="15.5" width="12" height="9" fill="none" stroke="#fff" stroke-width="1"/><rect x="1172" y="17" width="6" height="6" fill="#fff"/><rect x="1183" y="18" width="1.6" height="4" fill="#fff"/><path d="M1193.5 18 H1196 L1199.5 14.8 V24.2 L1196 21 H1193.5 Z" fill="none" stroke="#fff" stroke-width="1"/><path d="M1202 16.8 A4 4 0 0 1 1202 22.2 M1204.4 15 A6.6 6.6 0 0 1 1204.4 24 M1206.8 13.4 A9 9 0 0 1 1206.8 25.6" fill="none" stroke="#fff" stroke-width="1"/><g font-family="Liberation Sans,sans-serif" fill="#fff" font-size="12"><text x="1219" y="24" textLength="23" lengthAdjust="spacingAndGlyphs">ENG</text><text x="1267" y="15.4" textLength="28" lengthAdjust="spacingAndGlyphs">21:39</text><text x="1255" y="33" textLength="52" lengthAdjust="spacingAndGlyphs">31/5/2560</text></g><path d="M1325.2 12.2 H1340.9 V24.4 H1330.6 L1326.6 27.6 V24.4 H1325.2 Z" fill="#fff"/><path d="M1328 15.6 H1338.2 M1328 18.2 H1338.2 M1328 20.8 H1338.2" stroke="#04060b" stroke-width="1"/><circle cx="1340.6" cy="27.6" r="7.6" fill="#242424" stroke="#6a6a6a" stroke-width="1"/><text x="1340.6" y="32" font-family="Liberation Sans,sans-serif" font-size="12" fill="#fff" text-anchor="middle">3</text><rect x="1361.5" y="0" width="1" height="40" fill="#666"/></svg></div></body></html>
